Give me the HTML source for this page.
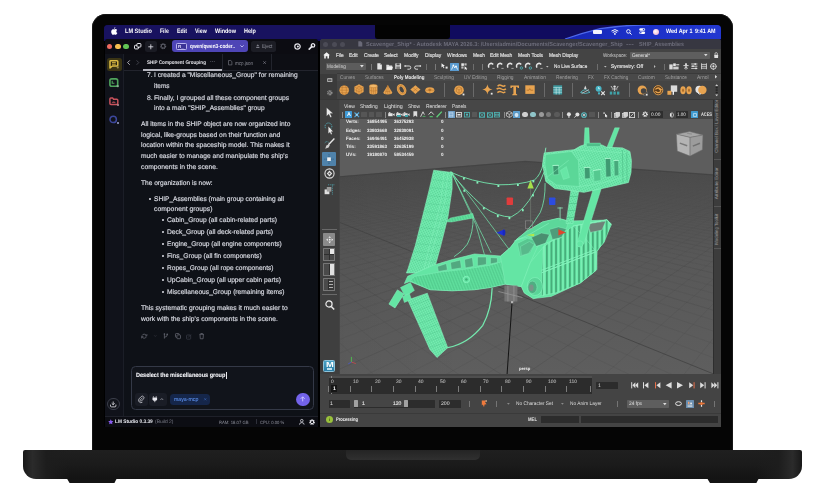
<!DOCTYPE html>
<html><head><meta charset="utf-8"><title>LM Studio + Maya</title>
<style>
*{box-sizing:border-box;margin:0;padding:0}
html,body{width:815px;height:493px;background:#fff;overflow:hidden}
body{font-family:"Liberation Sans",sans-serif;position:relative;text-rendering:geometricPrecision}
.a{position:absolute}
.t{position:absolute;white-space:nowrap;line-height:1;transform-origin:0 0}
svg{overflow:visible}
</style></head><body>
<div class="a" style="left:91.8px;top:13.9px;width:641.0px;height:440.0px;background:#050505;border-radius:14px 14px 0 0;box-shadow:inset 0 0 0 0.8px #1b1b1b;"></div>
<div class="a" style="left:66.0px;top:477.0px;width:51.5px;height:6.0px;background:#141414;clip-path:polygon(0 0,100% 0,94% 100%,7% 100%);"></div>
<div class="a" style="left:706.3px;top:477.0px;width:53.3px;height:6.0px;background:#141414;clip-path:polygon(0 0,100% 0,94% 100%,7% 100%);"></div>
<div class="a" style="left:23.0px;top:450.4px;width:779.0px;height:28.2px;background:linear-gradient(90deg,#181818 0,#2b2b2b 1.2%,#1d1d1d 3%,rgba(29,29,29,0) 6%,rgba(29,29,29,0) 94%,#1d1d1d 97%,#2b2b2b 98.8%,#181818 100%),linear-gradient(#1f1f1f,#1b1b1b 50%,#131313);border-radius:2px 2px 13px 13px;"></div>
<div class="a" style="left:345.5px;top:450.4px;width:134.0px;height:9.6px;background:linear-gradient(#242424,#303030);border-radius:0 0 5px 5px;"></div>
<div class="a" style="left:104px;top:25px;width:617px;height:401.5px;background:#000;border-radius:4px 4px 0 0;overflow:hidden">
<div class="a" style="left:-104px;top:-25px;width:815px;height:493px">
<div class="a" style="left:104.0px;top:25.0px;width:617.0px;height:16.0px;background:#100b5e;"></div>
<svg class="a" style="left:104.0px;top:25.0px;" width="617" height="16" viewBox="0 0 617 16"><defs><linearGradient id="wv" x1="0" y1="0" x2="1" y2="0"><stop offset="0" stop-color="#1626b4"/><stop offset="0.45" stop-color="#1b30c8"/><stop offset="1" stop-color="#2338d0"/></linearGradient></defs><path d="M461 14Q478 8 496 3.6Q520 0 545 0H617V14Z" fill="url(#wv)"/><path d="M461 14Q478 8 496 3.6Q520 0 545 -0.4" fill="none" stroke="#5c7cff" stroke-width="1.2" opacity="0.8"/><path d="M0 0H271V14H0Z" fill="#18125f"/></svg>
<div class="a" style="left:375.0px;top:25.0px;width:74.6px;height:13.5px;background:#030303;border-radius:0 0 3px 3px;"></div>
<svg class="a" style="left:111.0px;top:27.2px;" width="6.6" height="8" viewBox="0 0 6.6 8"><path d="M4.4 0.1Q4.4 1.5 3 2Q2.9 0.7 4.4 0.1Z M3.2 2.4Q4.2 1.8 5.2 2.2Q5.9 2.5 6.2 3Q5.2 3.6 5.3 4.7Q5.4 5.7 6.4 6.1Q5.9 7.4 5 7.8Q4.4 8 3.7 7.6Q3 7.4 2.4 7.7Q1.6 8 1 7.2Q0 5.9 0.2 4.2Q0.5 2.6 1.8 2.2Q2.5 2 3.2 2.4Z" fill="#fff"/></svg>
<span class="t" style="left:125.00px;top:27.64px;font-size:64px;color:#fff;transform:scale(0.0873,0.1);font-weight:bold;">LM Studio</span>
<span class="t" style="left:160.00px;top:27.64px;font-size:64px;color:#fff;transform:scale(0.0789,0.1);font-weight:bold;">File</span>
<span class="t" style="left:177.00px;top:27.64px;font-size:64px;color:#fff;transform:scale(0.0827,0.1);font-weight:bold;">Edit</span>
<span class="t" style="left:195.30px;top:27.64px;font-size:64px;color:#fff;transform:scale(0.0809,0.1);font-weight:bold;">View</span>
<span class="t" style="left:215.30px;top:27.64px;font-size:64px;color:#fff;transform:scale(0.0858,0.1);font-weight:bold;">Window</span>
<span class="t" style="left:244.00px;top:27.64px;font-size:64px;color:#fff;transform:scale(0.0851,0.1);font-weight:bold;">Help</span>
<div class="a" style="left:592.8px;top:30.1px;width:8.8px;height:3.8px;background:#f4f4ff;border-radius:1px;"></div>
<svg class="a" style="left:610.6px;top:28.6px;" width="7.8" height="6" viewBox="0 0 7.8 6"><path d="M0.5 2.1Q3.9 -0.9 7.3 2.1M1.7 3.5Q3.9 1.6 6.1 3.5" fill="none" stroke="#fff" stroke-width="1"/><circle cx="3.9" cy="4.9" r="0.9" fill="#fff"/></svg>
<svg class="a" style="left:625.8px;top:28.6px;" width="6" height="6" viewBox="0 0 6 6"><circle cx="2.4" cy="2.4" r="1.8" fill="none" stroke="#fff" stroke-width="0.9"/><path d="M3.8 3.8L5.6 5.6" stroke="#fff" stroke-width="1"/></svg>
<svg class="a" style="left:639.4px;top:28.4px;" width="6.4" height="6.4" viewBox="0 0 6.4 6.4"><rect x="0.3" y="0.3" width="5.8" height="2.5" rx="1.25" fill="#fff"/><rect x="0.3" y="3.5" width="5.8" height="2.5" rx="1.25" fill="#fff"/><circle cx="4.6" cy="1.55" r="0.8" fill="#2338d0"/><circle cx="1.8" cy="4.75" r="0.8" fill="#2338d0"/></svg>
<div class="a" style="left:652.6px;top:28.5px;width:6.0px;height:6.0px;background:radial-gradient(circle at 40% 40%,#fff,#f7c6dc 60%,#d8a0e8);border-radius:50%;"></div>
<span class="t" style="left:665.50px;top:27.74px;font-size:63px;color:#fff;transform:scale(0.0860,0.1);font-weight:bold;">Wed Apr 1</span>
<span class="t" style="left:695.00px;top:27.74px;font-size:63px;color:#fff;transform:scale(0.0861,0.1);font-weight:bold;">9:41 AM</span>
<div class="a" style="left:104.7px;top:38.7px;width:213.8px;height:388.0px;background:#0e1117;border-radius:3px 3px 0 0;"></div>
<div class="a" style="left:104.7px;top:38.7px;width:213.8px;height:15.0px;background:#0c0c12;border-radius:3px 3px 0 0;"></div>
<div class="a" style="left:104.7px;top:53.6px;width:18.5px;height:363.0px;background:#10121a;"></div>
<div class="a" style="left:123.2px;top:53.6px;width:0.6px;height:363.0px;background:#1b1e27;"></div>
<div class="a" style="left:123.8px;top:53.6px;width:194.7px;height:16.5px;background:#0d0e14;"></div>
<div class="a" style="left:123.8px;top:69.9px;width:194.7px;height:0.6px;background:#22242d;"></div>
<div class="a" style="left:106.8px;top:43.6px;width:5.6px;height:5.6px;background:#ee6a5f;border-radius:50%;"></div>
<div class="a" style="left:115.1px;top:43.6px;width:5.6px;height:5.6px;background:#f5bf4f;border-radius:50%;"></div>
<div class="a" style="left:123.1px;top:43.6px;width:5.6px;height:5.6px;background:#61c554;border-radius:50%;"></div>
<svg class="a" style="left:134.0px;top:43.2px;" width="7.5" height="6.5" viewBox="0 0 7.5 6.5"><rect x="0.5" y="2.3" width="4" height="3.6" rx="0.8" fill="none" stroke="#e8e8ee" stroke-width="1"/><rect x="2.9" y="0.5" width="4" height="3.6" rx="0.8" fill="#0c0c12" stroke="#e8e8ee" stroke-width="1"/></svg>
<div class="a" style="left:144.8px;top:41.0px;width:11.9px;height:10.8px;background:#1a1b23;border-radius:2.5px;"></div>
<svg class="a" style="left:147.9px;top:43.6px;" width="5.6" height="5.6" viewBox="0 0 5.6 5.6"><path d="M2.8 0.3V5.3M0.3 2.8H5.3" stroke="#d8d8e0" stroke-width="0.9" fill="none"/></svg>
<svg class="a" style="left:160.1px;top:43.2px;" width="6.4" height="6.4" viewBox="0 0 6.4 6.4"><circle cx="3.2" cy="3.2" r="2.3" fill="none" stroke="#5a5b66" stroke-width="1.5" stroke-dasharray="1.1 0.7"/><circle cx="3.2" cy="3.2" r="1.9" fill="none" stroke="#5a5b66" stroke-width="0.9"/></svg>
<div class="a" style="left:171.8px;top:40.4px;width:76.4px;height:12.0px;background:#4e45b6;border-radius:3px;"></div>
<div class="a" style="left:176.2px;top:43.3px;width:10.8px;height:6.3px;background:#3b3396;border-radius:1.3px;border:0.7px solid #b9b4ee;"></div>
<span class="t" style="left:177.60px;top:44.34px;font-size:44px;color:#e6e3ff;transform:scale(0.1000,0.1);font-weight:bold;">R_</span>
<span class="t" style="left:190.00px;top:43.14px;font-size:59px;color:#fff;transform:scale(0.0803,0.1);font-weight:bold;">qwen/qwen3-coder..</span>
<svg class="a" style="left:240.2px;top:45.2px;" width="4" height="2.6" viewBox="0 0 4 2.6"><path d="M0.4 0.4L2 2L3.6 0.4" stroke="#d9d6ff" stroke-width="0.8" fill="none"/></svg>
<div class="a" style="left:251.0px;top:40.7px;width:24.8px;height:11.0px;background:#1c1d25;border-radius:2.5px;"></div>
<svg class="a" style="left:255.6px;top:44.2px;" width="3.6" height="4.2" viewBox="0 0 3.6 4.2"><path d="M1.8 0.2L3.4 2.3H0.2Z M0.2 3.1H3.4V3.9H0.2Z" fill="#7c7d88"/></svg>
<span class="t" style="left:261.60px;top:43.34px;font-size:56px;color:#8d8e99;transform:scale(0.0835,0.1);">Eject</span>
<svg class="a" style="left:293.8px;top:42.9px;" width="7" height="7" viewBox="0 0 7 7"><circle cx="3.5" cy="3.5" r="2.7" fill="none" stroke="#e6e6ec" stroke-width="1.2"/><circle cx="3.9" cy="3.5" r="1" fill="#e6e6ec"/></svg>
<svg class="a" style="left:307.8px;top:42.8px;" width="7.4" height="7.4" viewBox="0 0 7.4 7.4"><path d="M1.2 6.2L4 3.4" stroke="#e6e6ec" stroke-width="1.7" stroke-linecap="round"/><circle cx="5" cy="2.4" r="1.7" fill="none" stroke="#e6e6ec" stroke-width="1.3"/></svg>
<div class="a" style="left:107.0px;top:57.6px;width:15.0px;height:13.4px;background:#3a3414;border-radius:2.5px;"></div>
<svg class="a" style="left:109.4px;top:60.0px;" width="9.6" height="9" viewBox="0 0 9.6 9"><path d="M1.6 0.8H8Q8.8 0.8 8.8 1.6V5.2Q8.8 6 8 6H3.4L1 8V1.6Q0.8 0.8 1.6 0.8Z" fill="#2a2510" stroke="#dcbc44" stroke-width="1.5" stroke-linejoin="round"/><path d="M3 2.6H6.8M3 4.2H6.8" stroke="#dcbc44" stroke-width="0.9"/><circle cx="8.8" cy="7.4" r="1.1" fill="#9a8a4a"/></svg>
<svg class="a" style="left:109.0px;top:78.4px;" width="9.8" height="9.6" viewBox="0 0 9.8 9.6"><rect x="0.9" y="0.9" width="7.8" height="7.4" rx="1.8" fill="none" stroke="#4fa45c" stroke-width="1.6"/><path d="M3.2 2.8V5.2H5.4" stroke="#4fa45c" stroke-width="1.1" fill="none"/><circle cx="8.8" cy="8.2" r="1.1" fill="#8ab092"/></svg>
<svg class="a" style="left:108.8px;top:97.0px;" width="10" height="9.4" viewBox="0 0 10 9.4"><path d="M0.9 2Q0.9 1 1.9 1H3.6L4.6 2.2H7.8Q8.8 2.2 8.8 3.2V6.6Q8.8 7.6 7.8 7.6H1.9Q0.9 7.6 0.9 6.6Z" fill="none" stroke="#c9525c" stroke-width="1.5"/><path d="M2.6 5.8Q4.6 3.2 6.8 5.8Z" fill="#c9525c"/><circle cx="9" cy="8" r="1.1" fill="#b08a90"/></svg>
<svg class="a" style="left:108.8px;top:115.0px;" width="10.6" height="10" viewBox="0 0 10.6 10"><circle cx="4.2" cy="4.4" r="3.2" fill="none" stroke="#3c479c" stroke-width="1.5"/><circle cx="9" cy="7.9" r="1" fill="#a0a6d0"/></svg>
<svg class="a" style="left:126.9px;top:59.8px;" width="3.4" height="5.2" viewBox="0 0 3.4 5.2"><path d="M2.8 0.4L0.6 2.6L2.8 4.8" stroke="#d0d0d8" stroke-width="0.8" fill="none"/></svg>
<svg class="a" style="left:136.2px;top:59.8px;" width="3.4" height="5.2" viewBox="0 0 3.4 5.2"><path d="M0.6 0.4L2.8 2.6L0.6 4.8" stroke="#4d4e59" stroke-width="0.8" fill="none"/></svg>
<span class="t" style="left:147.40px;top:59.54px;font-size:53px;color:#e4e4ea;transform:scale(0.0860,0.1);font-weight:bold;">SHIP Component Grouping</span>
<span class="t" style="left:210.20px;top:58.84px;font-size:50px;color:#6a6b76;transform:scale(0.1081,0.1);font-weight:bold;">···</span>
<div class="a" style="left:142.5px;top:69.4px;width:79.3px;height:1.2px;background:#b4b5be;"></div>
<div class="a" style="left:221.8px;top:53.6px;width:0.6px;height:16.3px;background:#22242d;"></div>
<div class="a" style="left:270.9px;top:53.6px;width:0.6px;height:16.3px;background:#22242d;"></div>
<svg class="a" style="left:227.6px;top:59.6px;" width="4.4" height="5.4" viewBox="0 0 4.4 5.4"><path d="M0.5 0.5H2.8L3.9 1.6V4.9H0.5Z" fill="none" stroke="#6f707b" stroke-width="0.7"/></svg>
<span class="t" style="left:234.60px;top:59.94px;font-size:54px;color:#8b8c97;transform:scale(0.0837,0.1);font-family:"Liberation Mono",monospace;">mcp.json</span>
<svg class="a" style="left:262.9px;top:60.8px;" width="3.2" height="3.2" viewBox="0 0 3.2 3.2"><path d="M0.3 0.3L2.9 2.9M2.9 0.3L0.3 2.9" stroke="#7a7b86" stroke-width="0.7"/></svg>
<span class="t" style="left:146.50px;top:71.34px;font-size:67.5px;color:#d9dbe3;transform:scale(0.1013,0.1);-webkit-text-stroke:1.6px #d9dbe3;">7.</span>
<span class="t" style="left:154.00px;top:71.34px;font-size:67.5px;color:#d9dbe3;transform:scale(0.0991,0.1);-webkit-text-stroke:1.6px #d9dbe3;">I created a "Miscellaneous_Group" for remaining</span>
<span class="t" style="left:154.00px;top:82.34px;font-size:67.5px;color:#d9dbe3;transform:scale(0.0967,0.1);-webkit-text-stroke:1.6px #d9dbe3;">items</span>
<span class="t" style="left:146.50px;top:94.34px;font-size:67.5px;color:#d9dbe3;transform:scale(0.1013,0.1);-webkit-text-stroke:1.6px #d9dbe3;">8.</span>
<span class="t" style="left:154.00px;top:94.34px;font-size:67.5px;color:#d9dbe3;transform:scale(0.0992,0.1);-webkit-text-stroke:1.6px #d9dbe3;">Finally, I grouped all these component groups</span>
<span class="t" style="left:154.00px;top:104.34px;font-size:67.5px;color:#d9dbe3;transform:scale(0.0980,0.1);-webkit-text-stroke:1.6px #d9dbe3;">into a main "SHIP_Assemblies" group</span>
<span class="t" style="left:141.00px;top:120.34px;font-size:67.5px;color:#d9dbe3;transform:scale(0.0986,0.1);-webkit-text-stroke:1.6px #d9dbe3;">All items in the SHIP object are now organized into</span>
<span class="t" style="left:141.00px;top:131.34px;font-size:67.5px;color:#d9dbe3;transform:scale(0.1001,0.1);-webkit-text-stroke:1.6px #d9dbe3;">logical, like-groups based on their function and</span>
<span class="t" style="left:141.00px;top:141.34px;font-size:67.5px;color:#d9dbe3;transform:scale(0.0994,0.1);-webkit-text-stroke:1.6px #d9dbe3;">location within the spaceship model. This makes it</span>
<span class="t" style="left:141.00px;top:152.34px;font-size:67.5px;color:#d9dbe3;transform:scale(0.0988,0.1);-webkit-text-stroke:1.6px #d9dbe3;">much easier to manage and manipulate the ship's</span>
<span class="t" style="left:141.00px;top:163.34px;font-size:67.5px;color:#d9dbe3;transform:scale(0.1001,0.1);-webkit-text-stroke:1.6px #d9dbe3;">components in the scene.</span>
<span class="t" style="left:141.00px;top:179.34px;font-size:67.5px;color:#d9dbe3;transform:scale(0.0977,0.1);-webkit-text-stroke:1.6px #d9dbe3;">The organization is now:</span>
<div class="a" style="left:149.1px;top:198.1px;width:1.8px;height:1.8px;background:#d9dbe3;border-radius:50%;"></div>
<span class="t" style="left:154.00px;top:195.34px;font-size:67.5px;color:#d9dbe3;transform:scale(0.0976,0.1);-webkit-text-stroke:1.6px #d9dbe3;">SHIP_Assemblies (main group containing all</span>
<span class="t" style="left:154.00px;top:205.34px;font-size:67.5px;color:#d9dbe3;transform:scale(0.1006,0.1);-webkit-text-stroke:1.6px #d9dbe3;">component groups)</span>
<div class="a" style="left:162.1px;top:219.0px;width:1.8px;height:1.8px;background:#d9dbe3;border-radius:50%;"></div>
<span class="t" style="left:167.40px;top:216.34px;font-size:67.5px;color:#d9dbe3;transform:scale(0.0990,0.1);-webkit-text-stroke:1.6px #d9dbe3;">Cabin_Group (all cabin-related parts)</span>
<div class="a" style="left:162.1px;top:231.0px;width:1.8px;height:1.8px;background:#d9dbe3;border-radius:50%;"></div>
<span class="t" style="left:167.40px;top:228.34px;font-size:67.5px;color:#d9dbe3;transform:scale(0.0992,0.1);-webkit-text-stroke:1.6px #d9dbe3;">Deck_Group (all deck-related parts)</span>
<div class="a" style="left:162.1px;top:243.1px;width:1.8px;height:1.8px;background:#d9dbe3;border-radius:50%;"></div>
<span class="t" style="left:167.40px;top:240.34px;font-size:67.5px;color:#d9dbe3;transform:scale(0.0977,0.1);-webkit-text-stroke:1.6px #d9dbe3;">Engine_Group (all engine components)</span>
<div class="a" style="left:162.1px;top:255.2px;width:1.8px;height:1.8px;background:#d9dbe3;border-radius:50%;"></div>
<span class="t" style="left:167.40px;top:252.34px;font-size:67.5px;color:#d9dbe3;transform:scale(0.0985,0.1);-webkit-text-stroke:1.6px #d9dbe3;">Fins_Group (all fin components)</span>
<div class="a" style="left:162.1px;top:267.2px;width:1.8px;height:1.8px;background:#d9dbe3;border-radius:50%;"></div>
<span class="t" style="left:167.40px;top:264.34px;font-size:67.5px;color:#d9dbe3;transform:scale(0.0976,0.1);-webkit-text-stroke:1.6px #d9dbe3;">Ropes_Group (all rope components)</span>
<div class="a" style="left:162.1px;top:279.2px;width:1.8px;height:1.8px;background:#d9dbe3;border-radius:50%;"></div>
<span class="t" style="left:167.40px;top:276.34px;font-size:67.5px;color:#d9dbe3;transform:scale(0.0983,0.1);-webkit-text-stroke:1.6px #d9dbe3;">UpCabin_Group (all upper cabin parts)</span>
<div class="a" style="left:162.1px;top:291.3px;width:1.8px;height:1.8px;background:#d9dbe3;border-radius:50%;"></div>
<span class="t" style="left:167.40px;top:288.34px;font-size:67.5px;color:#d9dbe3;transform:scale(0.0985,0.1);-webkit-text-stroke:1.6px #d9dbe3;">Miscellaneous_Group (remaining items)</span>
<span class="t" style="left:141.00px;top:304.34px;font-size:67.5px;color:#d9dbe3;transform:scale(0.0992,0.1);-webkit-text-stroke:1.6px #d9dbe3;">This systematic grouping makes it much easier to</span>
<span class="t" style="left:141.00px;top:315.34px;font-size:67.5px;color:#d9dbe3;transform:scale(0.0999,0.1);-webkit-text-stroke:1.6px #d9dbe3;">work with the ship's components in the scene.</span>
<svg class="a" style="left:140.6px;top:333.3px;" width="6.4" height="6.4" viewBox="0 0 6.4 6.4"><path d="M1 2.6A2.4 2.4 0 0 1 5.4 2.6M5.4 3.8A2.4 2.4 0 0 1 1 3.8" fill="none" stroke="#62646f" stroke-width="0.8"/><path d="M5.9 1V2.9H4M0.5 5.4V3.5H2.4" fill="none" stroke="#62646f" stroke-width="0.7"/></svg>
<svg class="a" style="left:154.0px;top:335.4px;" width="2.6" height="2" viewBox="0 0 2.6 2"><path d="M0.2 0.3L1.3 1.5L2.4 0.3" stroke="#3a3c47" stroke-width="0.6" fill="none"/></svg>
<svg class="a" style="left:163.4px;top:333.4px;" width="5.6" height="6.2" viewBox="0 0 5.6 6.2"><path d="M1.4 0.8V5.6M1.4 4.2Q4.2 4.2 4.2 1.8" fill="none" stroke="#62646f" stroke-width="0.8"/><circle cx="1.4" cy="1" r="0.8" fill="#62646f"/><circle cx="4.2" cy="1.4" r="0.8" fill="#62646f"/></svg>
<svg class="a" style="left:175.4px;top:333.4px;" width="6" height="6.2" viewBox="0 0 6 6.2"><rect x="0.5" y="0.5" width="3.6" height="3.8" rx="0.7" fill="none" stroke="#62646f" stroke-width="0.8"/><rect x="1.9" y="1.9" width="3.6" height="3.8" rx="0.7" fill="#0e1117" stroke="#62646f" stroke-width="0.8"/></svg>
<svg class="a" style="left:186.3px;top:333.5px;" width="5.6" height="5.8" viewBox="0 0 5.6 5.8"><rect x="0.5" y="1" width="4.2" height="4.2" rx="0.7" fill="none" stroke="#3a3c47" stroke-width="0.7"/><path d="M2 3.6L5 0.6" stroke="#3a3c47" stroke-width="0.7"/></svg>
<svg class="a" style="left:198.6px;top:333.3px;" width="5.4" height="6.4" viewBox="0 0 5.4 6.4"><path d="M0.4 1.4H5M1.8 1.2V0.5H3.6V1.2M1 1.6L1.3 5.8H4.1L4.4 1.6" fill="none" stroke="#62646f" stroke-width="0.8"/></svg>
<div class="a" style="left:130.5px;top:365.6px;width:183.5px;height:44.3px;background:#11141b;border-radius:4.5px;border:0.9px solid #343947;"></div>
<span class="t" style="left:135.90px;top:371.74px;font-size:63px;color:#f4f5f9;transform:scale(0.0877,0.1);font-weight:bold;-webkit-text-stroke:0.8px #f4f5f9;">Deselect the miscellaneous group</span>
<div class="a" style="left:225.9px;top:372.2px;width:0.6px;height:6.8px;background:#e8e8ee;"></div>
<div class="a" style="left:134.5px;top:393.0px;width:13.5px;height:12.6px;background:#1a1d26;border-radius:3px;"></div>
<svg class="a" style="left:138.0px;top:395.8px;" width="6.6" height="7" viewBox="0 0 6.6 7"><path d="M4.9 2L2.6 4.3A0.8 0.8 0 0 0 3.8 5.4L5.8 3.3A1.6 1.6 0 0 0 3.5 1L1.3 3.3A2.4 2.4 0 0 0 4.7 6.6" fill="none" stroke="#c9cad2" stroke-width="0.8" transform="translate(-0.3,-0.4)"/></svg>
<div class="a" style="left:149.4px;top:393.0px;width:17.6px;height:12.6px;background:#1a1d26;border-radius:3px;"></div>
<svg class="a" style="left:152.4px;top:396.2px;" width="6" height="6.4" viewBox="0 0 6 6.4"><path d="M1.4 0.3V1.5M4.2 0.3V1.5" stroke="#e6e6ec" stroke-width="0.8"/><path d="M0.5 1.5H5.1V3.2Q5.1 5 2.8 5Q0.5 5 0.5 3.2Z" fill="#e6e6ec"/><path d="M2.8 5V6.2" stroke="#e6e6ec" stroke-width="0.8"/></svg>
<svg class="a" style="left:160.4px;top:398.4px;" width="3.6" height="2.4" viewBox="0 0 3.6 2.4"><path d="M0.4 2L1.8 0.5L3.2 2" stroke="#a9aab4" stroke-width="0.7" fill="none"/></svg>
<div class="a" style="left:169.6px;top:393.7px;width:40.4px;height:11.6px;background:#15264a;border-radius:3.5px;"></div>
<span class="t" style="left:174.20px;top:396.34px;font-size:56px;color:#5585dc;transform:scale(0.0930,0.1);-webkit-text-stroke:1.4px #5585dc;">maya-mcp</span>
<svg class="a" style="left:203.5px;top:398.2px;" width="2.6" height="2.6" viewBox="0 0 2.6 2.6"><path d="M0.3 0.3L2.3 2.3M2.3 0.3L0.3 2.3" stroke="#3d67b5" stroke-width="0.6"/></svg>
<div class="a" style="left:296.3px;top:392.6px;width:13.4px;height:13.4px;background:#7363ea;border-radius:50%;"></div>
<svg class="a" style="left:300.3px;top:396.4px;" width="5.4" height="5.8" viewBox="0 0 5.4 5.8"><path d="M2.7 5.4V0.9M0.7 2.8L2.7 0.8L4.7 2.8" stroke="#cfc8ff" stroke-width="0.9" fill="none"/></svg>
<div class="a" style="left:107.1px;top:397.6px;width:12.8px;height:12.8px;background:#12141b;border-radius:50%;border:0.8px solid #3a3d49;"></div>
<svg class="a" style="left:110.3px;top:400.6px;" width="6.4" height="6.6" viewBox="0 0 6.4 6.6"><path d="M3.2 0.5V3.6M1.7 2.3L3.2 3.8L4.7 2.3" stroke="#e6e6ec" stroke-width="0.8" fill="none"/><path d="M0.5 3.6V5Q0.5 5.9 1.4 5.9H5Q5.9 5.9 5.9 5V3.6" stroke="#e6e6ec" stroke-width="0.8" fill="none"/></svg>
<div class="a" style="left:104.7px;top:416.2px;width:213.8px;height:10.5px;background:#0c0d13;"></div>
<div class="a" style="left:104.7px;top:416.0px;width:213.8px;height:0.6px;background:#1e2029;"></div>
<svg class="a" style="left:107.8px;top:418.6px;" width="5.6" height="5.6" viewBox="0 0 5.6 5.6"><path d="M2.8 0.2L3.6 1.9L5.4 2.1L4.1 3.4L4.4 5.3L2.8 4.4L1.2 5.3L1.5 3.4L0.2 2.1L2 1.9Z" fill="#8a5cf0"/></svg>
<span class="t" style="left:115.40px;top:418.64px;font-size:52px;color:#eceef4;transform:scale(0.0921,0.1);font-weight:bold;">LM Studio 0.3.39</span>
<span class="t" style="left:155.00px;top:418.84px;font-size:50px;color:#7b7d89;transform:scale(0.0988,0.1);">(Build 2)</span>
<span class="t" style="left:218.80px;top:419.54px;font-size:46px;color:#8e909b;transform:scale(0.0917,0.1);font-family:"Liberation Mono",monospace;">RAM: 18.07 GB</span>
<div class="a" style="left:255.8px;top:418.8px;width:0.5px;height:5.6px;background:#2e303a;"></div>
<span class="t" style="left:260.00px;top:419.54px;font-size:46px;color:#8e909b;transform:scale(0.0909,0.1);font-family:"Liberation Mono",monospace;">CPU: 0.00 %</span>
<svg class="a" style="left:298.8px;top:418.6px;" width="5.6" height="6" viewBox="0 0 5.6 6"><circle cx="2.8" cy="1.7" r="1.3" fill="none" stroke="#d6d7df" stroke-width="0.8"/><path d="M0.5 5.6Q0.5 3.6 2.8 3.6Q5.1 3.6 5.1 5.6" fill="none" stroke="#d6d7df" stroke-width="0.8"/></svg>
<svg class="a" style="left:309.4px;top:418.5px;" width="6.2" height="6.2" viewBox="0 0 6.2 6.2"><circle cx="3.1" cy="3.1" r="2" fill="none" stroke="#e6e6ec" stroke-width="1.6" stroke-dasharray="1 0.58"/><circle cx="3.1" cy="3.1" r="1.6" fill="none" stroke="#e6e6ec" stroke-width="1"/></svg>
<div class="a" style="left:320.2px;top:38.7px;width:401.0px;height:387.7px;background:#444444;border-radius:3px 3px 0 3px;"></div>
<div class="a" style="left:320.2px;top:38.7px;width:401.0px;height:10.8px;background:#373741;border-radius:3px 3px 0 0;"></div>
<div class="a" style="left:323.1px;top:41.5px;width:5.4px;height:5.4px;background:#4b4b56;border-radius:50%;"></div>
<div class="a" style="left:331.5px;top:41.5px;width:5.4px;height:5.4px;background:#4b4b56;border-radius:50%;"></div>
<div class="a" style="left:339.8px;top:41.5px;width:5.4px;height:5.4px;background:#4b4b56;border-radius:50%;"></div>
<svg class="a" style="left:358.3px;top:41.2px;" width="4.6" height="5.8" viewBox="0 0 4.6 5.8"><path d="M0.3 0.3H2.9L4.3 1.7V5.5H0.3Z" fill="#6a6a78"/></svg>
<span class="t" style="left:365.70px;top:41.14px;font-size:59px;color:#6c6c7a;transform:scale(0.0947,0.1);font-weight:bold;">Scavenger_Ship* - Autodesk MAYA 2026.3: /Users/admin/Documents/Scavenger/Scavenger_Ship</span>
<span class="t" style="left:626.20px;top:41.14px;font-size:59px;color:#6c6c7a;transform:scale(0.1323,0.1);font-weight:bold;">---</span>
<span class="t" style="left:639.00px;top:41.14px;font-size:59px;color:#6c6c7a;transform:scale(0.0903,0.1);font-weight:bold;">SHIP_Assemblies</span>
<svg class="a" style="left:323.2px;top:51.8px;" width="7.2" height="6.8" viewBox="0 0 7.2 6.8"><path d="M3.6 0.3L7 3.3H6V6.5H4.4V4.3H2.8V6.5H1.2V3.3H0.2Z" fill="#f0f0f0"/></svg>
<span class="t" style="left:335.70px;top:52.34px;font-size:56px;color:#e6e6e6;transform:scale(0.0842,0.1);-webkit-text-stroke:1.4px #e6e6e6;">File</span>
<span class="t" style="left:349.00px;top:52.34px;font-size:56px;color:#e6e6e6;transform:scale(0.0881,0.1);-webkit-text-stroke:1.4px #e6e6e6;">Edit</span>
<span class="t" style="left:364.00px;top:52.34px;font-size:56px;color:#e6e6e6;transform:scale(0.0880,0.1);-webkit-text-stroke:1.4px #e6e6e6;">Create</span>
<span class="t" style="left:384.30px;top:52.34px;font-size:56px;color:#e6e6e6;transform:scale(0.0880,0.1);-webkit-text-stroke:1.4px #e6e6e6;">Select</span>
<span class="t" style="left:404.00px;top:52.34px;font-size:56px;color:#e6e6e6;transform:scale(0.0885,0.1);-webkit-text-stroke:1.4px #e6e6e6;">Modify</span>
<span class="t" style="left:424.70px;top:52.34px;font-size:56px;color:#e6e6e6;transform:scale(0.0888,0.1);-webkit-text-stroke:1.4px #e6e6e6;">Display</span>
<span class="t" style="left:446.80px;top:52.34px;font-size:56px;color:#e6e6e6;transform:scale(0.0876,0.1);-webkit-text-stroke:1.4px #e6e6e6;">Windows</span>
<span class="t" style="left:473.00px;top:52.34px;font-size:56px;color:#e6e6e6;transform:scale(0.0876,0.1);-webkit-text-stroke:1.4px #e6e6e6;">Mesh</span>
<span class="t" style="left:490.00px;top:52.34px;font-size:56px;color:#e6e6e6;transform:scale(0.0896,0.1);-webkit-text-stroke:1.4px #e6e6e6;">Edit Mesh</span>
<span class="t" style="left:518.00px;top:52.34px;font-size:56px;color:#e6e6e6;transform:scale(0.0886,0.1);-webkit-text-stroke:1.4px #e6e6e6;">Mesh Tools</span>
<span class="t" style="left:549.00px;top:52.34px;font-size:56px;color:#e6e6e6;transform:scale(0.0872,0.1);-webkit-text-stroke:1.4px #e6e6e6;">Mesh Display</span>
<span class="t" style="left:602.70px;top:52.44px;font-size:54px;color:#d0d0d0;transform:scale(0.0848,0.1);">Workspace:</span>
<div class="a" style="left:630.0px;top:51.8px;width:80.0px;height:6.8px;background:#5e5e5e;border-radius:0.8px;"></div>
<span class="t" style="left:631.50px;top:52.54px;font-size:53px;color:#e8e8e8;transform:scale(0.0860,0.1);">General*</span>
<svg class="a" style="left:704.4px;top:54.0px;" width="3.6" height="2.4" viewBox="0 0 3.6 2.4"><path d="M0 0H3.6L1.8 2.2Z" fill="#d8d8d8"/></svg>
<svg class="a" style="left:714.4px;top:51.6px;" width="4.4" height="6.2" viewBox="0 0 4.4 6.2"><path d="M1 2.8V1.8A1.2 1.2 0 0 1 3.4 1.8V2.8" fill="none" stroke="#d8d8d8" stroke-width="0.8"/><rect x="0.3" y="2.7" width="3.8" height="3.2" rx="0.5" fill="#e0e0e0"/></svg>
<div class="a" style="left:325.7px;top:63.0px;width:40.0px;height:7.3px;background:#5c5c5c;border-radius:0.8px;"></div>
<span class="t" style="left:327.20px;top:63.54px;font-size:53px;color:#d8d8d8;transform:scale(0.0874,0.1);">Modeling</span>
<svg class="a" style="left:359.6px;top:65.4px;" width="3.8" height="2.6" viewBox="0 0 3.8 2.6"><path d="M0 0H3.8L1.9 2.4Z" fill="#e0e0e0"/></svg>
<div class="a" style="left:370.6px;top:63.7px;width:0.8px;height:6.0px;background:#7a7a7a;"></div>
<svg class="a" style="left:377.4px;top:63.2px;" width="5.2" height="6.8" viewBox="0 0 5.2 6.8"><path d="M0.3 0.3H3.2L4.9 2V6.5H0.3Z" fill="#e4e4e4"/><path d="M3.2 0.3V2H4.9" fill="#9a9a9a"/></svg>
<svg class="a" style="left:385.8px;top:63.6px;" width="7.2" height="6.2" viewBox="0 0 7.2 6.2"><path d="M0.3 0.8H2.6L3.3 1.6H6.2V5.8H0.3Z" fill="#d8d8d8"/><path d="M1.5 2.8H7L6 5.8H0.4Z" fill="#f4f4f4"/></svg>
<svg class="a" style="left:395.3px;top:63.4px;" width="6.4" height="6.4" viewBox="0 0 6.4 6.4"><rect x="0.3" y="0.3" width="5.8" height="5.8" rx="0.6" fill="#e0e0e0"/><rect x="1.5" y="0.3" width="3.2" height="2" fill="#555"/><rect x="1.3" y="3.4" width="3.6" height="2.7" fill="#777"/></svg>
<svg class="a" style="left:404.4px;top:64.6px;" width="7.4" height="4.6" viewBox="0 0 7.4 4.6"><path d="M0.5 1H5.2A1.6 1.6 0 0 1 5.2 4.2H3.4" fill="none" stroke="#e8e8e8" stroke-width="0.9"/><path d="M1.6 0L0 1L1.6 2Z" fill="#e8e8e8"/></svg>
<svg class="a" style="left:413.6px;top:64.6px;" width="7.4" height="4.6" viewBox="0 0 7.4 4.6"><path d="M6.9 1H2.2A1.6 1.6 0 0 0 2.2 4.2H4" fill="none" stroke="#e8e8e8" stroke-width="0.9"/><path d="M5.8 0L7.4 1L5.8 2Z" fill="#e8e8e8"/></svg>
<div class="a" style="left:426.4px;top:63.7px;width:0.8px;height:6.0px;background:#6e6e6e;"></div>
<div class="a" style="left:435.3px;top:63.7px;width:0.8px;height:6.0px;background:#7a7a7a;"></div>
<svg class="a" style="left:441.0px;top:63.3px;" width="7" height="7" viewBox="0 0 7 7"><path d="M0.5 0.3L0.5 4.4L1.7 3.4L2.6 5.3L3.4 4.9L2.5 3.1H4Z" fill="#f0f0f0"/><rect x="4.6" y="3.6" width="2" height="2" fill="#e8e8e8"/></svg>
<div class="a" style="left:450.0px;top:62.7px;width:9.2px;height:8.2px;background:#5a9bd0;border-radius:0.6px;"></div>
<svg class="a" style="left:451.0px;top:63.5px;" width="7.2" height="6.6" viewBox="0 0 7.2 6.6"><path d="M0.6 5.6L2.4 1.2L3.8 4L5 2L6.6 5.6" fill="none" stroke="#fff" stroke-width="0.8"/><circle cx="2.4" cy="1.4" r="0.8" fill="#fff"/><circle cx="5" cy="2.2" r="0.8" fill="#fff"/></svg>
<svg class="a" style="left:461.0px;top:63.3px;" width="7" height="7" viewBox="0 0 7 7"><rect x="0.3" y="0.3" width="2.6" height="2.6" fill="#e8e8e8"/><rect x="3.4" y="0.3" width="2.2" height="2.2" fill="#bdbdbd"/><rect x="0.3" y="3.4" width="2.2" height="2.2" fill="#bdbdbd"/><path d="M3.6 3.2V6.8L4.6 6L5.3 7L5.9 6.6L5.2 5.6H6.4Z" fill="#f4f4f4"/></svg>
<div class="a" style="left:472.9px;top:63.7px;width:0.8px;height:6.0px;background:#6e6e6e;"></div>
<div class="a" style="left:482.4px;top:63.7px;width:0.8px;height:6.0px;background:#7a7a7a;"></div>
<svg class="a" style="left:487.9px;top:63.3px;" width="6.8" height="6.8" viewBox="0 0 6.8 6.8"><path d="M1.2 4.9A2.3 2.3 0 1 1 4.9 1.3" fill="none" stroke="#e4e4e4" stroke-width="1.5" transform="rotate(8 3.4 3.4)"/><path d="M4.4 5.4H6.6" stroke="#d0d0d0" stroke-width="0.7"/></svg>
<svg class="a" style="left:497.1px;top:63.3px;" width="6.8" height="6.8" viewBox="0 0 6.8 6.8"><path d="M1.2 4.9A2.3 2.3 0 1 1 4.9 1.3" fill="none" stroke="#e4e4e4" stroke-width="1.5" transform="rotate(8 3.4 3.4)"/><path d="M4.4 5.4H6.6" stroke="#d0d0d0" stroke-width="0.7"/></svg>
<svg class="a" style="left:506.6px;top:63.3px;" width="6.8" height="6.8" viewBox="0 0 6.8 6.8"><path d="M1.2 4.9A2.3 2.3 0 1 1 4.9 1.3" fill="none" stroke="#e4e4e4" stroke-width="1.5" transform="rotate(8 3.4 3.4)"/><path d="M4.4 5.4H6.6" stroke="#d0d0d0" stroke-width="0.7"/></svg>
<svg class="a" style="left:515.6px;top:63.3px;" width="6.8" height="6.8" viewBox="0 0 6.8 6.8"><path d="M1.2 4.9A2.3 2.3 0 1 1 4.9 1.3" fill="none" stroke="#e4e4e4" stroke-width="1.5" transform="rotate(8 3.4 3.4)"/><circle cx="5.4" cy="5" r="1.2" fill="none" stroke="#4fc3c8" stroke-width="0.7"/></svg>
<svg class="a" style="left:525.3px;top:63.3px;" width="6.8" height="6.8" viewBox="0 0 6.8 6.8"><path d="M1.2 4.9A2.3 2.3 0 1 1 4.9 1.3" fill="none" stroke="#e4e4e4" stroke-width="1.5" transform="rotate(8 3.4 3.4)"/><circle cx="5.4" cy="5" r="1.2" fill="none" stroke="#4fc3c8" stroke-width="0.7"/></svg>
<svg class="a" style="left:535.6px;top:63.3px;" width="6.8" height="6.8" viewBox="0 0 6.8 6.8"><path d="M1.2 4.9A2.3 2.3 0 1 1 4.9 1.3" fill="none" stroke="#e4e4e4" stroke-width="1.5" transform="rotate(8 3.4 3.4)"/><path d="M4.4 5.4H6.6" stroke="#d0d0d0" stroke-width="0.7"/></svg>
<svg class="a" style="left:545.6px;top:66.0px;" width="2.6" height="1.8" viewBox="0 0 2.6 1.8"><path d="M0 0H2.6L1.3 1.6Z" fill="#bdbdbd"/></svg>
<span class="t" style="left:553.70px;top:63.54px;font-size:53px;color:#ececec;transform:scale(0.0883,0.1);-webkit-text-stroke:1.2px #ececec;">No Live Surface</span>
<div class="a" style="left:596.9px;top:63.7px;width:0.8px;height:6.0px;background:#6e6e6e;"></div>
<svg class="a" style="left:604.4px;top:66.0px;" width="2.6" height="1.8" viewBox="0 0 2.6 1.8"><path d="M0 0H2.6L1.3 1.6Z" fill="#bdbdbd"/></svg>
<span class="t" style="left:611.30px;top:63.54px;font-size:53px;color:#ececec;transform:scale(0.0954,0.1);-webkit-text-stroke:1.2px #ececec;">Symmetry: Off</span>
<svg class="a" style="left:654.2px;top:65.2px;" width="1.8" height="3" viewBox="0 0 1.8 3"><path d="M0 0L1.6 1.5L0 3Z" fill="#bdbdbd"/></svg>
<div class="a" style="left:663.9px;top:63.7px;width:0.8px;height:6.0px;background:#6e6e6e;"></div>
<svg class="a" style="left:669.0px;top:63.2px;" width="11" height="7" viewBox="0 0 11 7"><rect x="0.3" y="1.4" width="3.4" height="5" fill="#dcdcdc"/><rect x="4.2" y="0.4" width="2.6" height="2.6" fill="#e8e8e8"/><rect x="4.2" y="3.6" width="5.4" height="2.8" fill="#cfcfcf"/><rect x="7.2" y="1" width="3" height="1.4" fill="#bdbdbd"/></svg>
<svg class="a" style="left:683.2px;top:63.2px;" width="6" height="7" viewBox="0 0 6 7"><path d="M3 0.3V6.6M0.4 2.6H5.6M1.4 5.6L3 3.6L4.6 5.6" stroke="#e0e0e0" stroke-width="0.9" fill="none"/><circle cx="3" cy="1.2" r="0.9" fill="#e0e0e0"/></svg>
<svg class="a" style="left:691.4px;top:63.4px;" width="6.6" height="6.6" viewBox="0 0 6.6 6.6"><path d="M0.2 1H6.4M0.2 3.2H6.4M0.2 5.4H6.4" stroke="#dcdcdc" stroke-width="0.9"/><rect x="3.6" y="0.3" width="1.2" height="1.6" fill="#f4f4f4"/><rect x="1.4" y="2.4" width="1.2" height="1.6" fill="#f4f4f4"/><rect x="4.4" y="4.6" width="1.2" height="1.6" fill="#f4f4f4"/></svg>
<svg class="a" style="left:700.6px;top:63.4px;" width="6" height="6.6" viewBox="0 0 6 6.6"><path d="M0.5 0.3V6.3M5.5 0.3V6.3M0.5 1.4H5.5M0.5 3.3H5.5M0.5 5.2H5.5" stroke="#dcdcdc" stroke-width="0.8"/></svg>
<svg class="a" style="left:709.6px;top:63.2px;" width="6.8" height="6.8" viewBox="0 0 6.8 6.8"><circle cx="3.4" cy="3.4" r="2.8" fill="none" stroke="#e0e0e0" stroke-width="0.9"/><circle cx="3.4" cy="3.4" r="1.1" fill="#e0e0e0"/><path d="M3.4 0V1.4M3.4 5.4V6.8M0 3.4H1.4M5.4 3.4H6.8" stroke="#e0e0e0" stroke-width="0.8"/></svg>
<div class="a" style="left:319.8px;top:73.6px;width:401.4px;height:7.8px;background:#494949;"></div>
<div class="a" style="left:337.0px;top:73.4px;width:384.2px;height:0.6px;background:#3a3a3a;"></div>
<span class="t" style="left:340.00px;top:74.44px;font-size:54px;color:#a2a2a2;transform:scale(0.0877,0.1);">Curves</span>
<span class="t" style="left:365.00px;top:74.44px;font-size:54px;color:#a2a2a2;transform:scale(0.0868,0.1);">Surfaces</span>
<span class="t" style="left:393.50px;top:74.44px;font-size:54px;color:#f0f0f0;transform:scale(0.0833,0.1);font-weight:bold;">Poly Modeling</span>
<span class="t" style="left:434.00px;top:74.44px;font-size:54px;color:#a2a2a2;transform:scale(0.0900,0.1);">Sculpting</span>
<span class="t" style="left:464.00px;top:74.44px;font-size:54px;color:#a2a2a2;transform:scale(0.0901,0.1);">UV Editing</span>
<span class="t" style="left:496.70px;top:74.44px;font-size:54px;color:#a2a2a2;transform:scale(0.0906,0.1);">Rigging</span>
<span class="t" style="left:523.70px;top:74.44px;font-size:54px;color:#a2a2a2;transform:scale(0.0920,0.1);">Animation</span>
<span class="t" style="left:556.30px;top:74.44px;font-size:54px;color:#a2a2a2;transform:scale(0.0883,0.1);">Rendering</span>
<span class="t" style="left:587.70px;top:74.44px;font-size:54px;color:#a2a2a2;transform:scale(0.0841,0.1);">FX</span>
<span class="t" style="left:603.50px;top:74.44px;font-size:54px;color:#a2a2a2;transform:scale(0.0858,0.1);">FX Caching</span>
<span class="t" style="left:638.00px;top:74.44px;font-size:54px;color:#a2a2a2;transform:scale(0.0898,0.1);">Custom</span>
<span class="t" style="left:665.00px;top:74.44px;font-size:54px;color:#a2a2a2;transform:scale(0.0854,0.1);">Substance</span>
<span class="t" style="left:697.00px;top:74.44px;font-size:54px;color:#a2a2a2;transform:scale(0.0912,0.1);">Arnol</span>
<svg class="a" style="left:714.6px;top:75.4px;" width="2.4" height="3.6" viewBox="0 0 2.4 3.6"><path d="M0 0L2.2 1.8L0 3.6Z" fill="#d8d8d8"/></svg>
<div class="a" style="left:319.8px;top:81.4px;width:401.4px;height:17.6px;background:#444;"></div>
<div class="a" style="left:319.8px;top:73.6px;width:17.6px;height:25.4px;background:#3b3b3b;"></div>
<svg class="a" style="left:327.2px;top:77.6px;" width="5.6" height="4.2" viewBox="0 0 5.6 4.2"><rect x="0.3" y="0.3" width="5" height="3.6" fill="#cfcfcf"/><rect x="1" y="1.2" width="3.6" height="2" fill="#555"/></svg>
<svg class="a" style="left:327.2px;top:90.0px;" width="5.6" height="5.6" viewBox="0 0 5.6 5.6"><circle cx="2.8" cy="2.8" r="2" fill="none" stroke="#9a9a9a" stroke-width="1.4" stroke-dasharray="0.9 0.6"/><circle cx="2.8" cy="2.8" r="1.1" fill="none" stroke="#9a9a9a" stroke-width="0.7"/></svg>
<svg class="a" style="left:338.8px;top:84.5px;" width="10.4" height="10.4" viewBox="0 0 10.4 10.4"><circle cx="5.2" cy="5.2" r="4.8" fill="#e7a350"/><ellipse cx="5.2" cy="5.2" rx="2.2" ry="4.8" fill="none" stroke="#b0702a" stroke-width="0.5"/><path d="M0.4 5.2H10M1.2 2.6H9.2M1.2 7.8H9.2" stroke="#b0702a" stroke-width="0.5"/></svg>
<svg class="a" style="left:353.5px;top:84.3px;" width="10" height="10.8" viewBox="0 0 10 10.8"><path d="M5 0.3L9.6 2.8V8L5 10.5L0.4 8V2.8Z" fill="#e7a350"/><path d="M0.4 2.8L5 5.3L9.6 2.8M5 5.3V10.5M2.7 1.5L7.3 4M7.3 1.5L2.7 4M0.4 5.4L5 7.9L9.6 5.4M2.7 4V9.2M7.3 4V9.2" stroke="#b0702a" stroke-width="0.45" fill="none"/></svg>
<svg class="a" style="left:368.6px;top:84.3px;" width="8.8" height="10.8" viewBox="0 0 8.8 10.8"><path d="M0.4 2V8.8A4 1.7 0 0 0 8.4 8.8V2Z" fill="#e7a350"/><ellipse cx="4.4" cy="2" rx="4" ry="1.7" fill="#f2b868" stroke="#b0702a" stroke-width="0.4"/><path d="M2.4 3.5V10.2M4.4 3.7V10.5M6.4 3.5V10.2M0.4 5.4A4 1.7 0 0 0 8.4 5.4" stroke="#b0702a" stroke-width="0.45" fill="none"/></svg>
<svg class="a" style="left:382.9px;top:85.1px;" width="9.6" height="10" viewBox="0 0 9.6 10"><path d="M4.8 0.3L9.3 7.6A4.5 1.9 0 0 1 0.3 7.6Z" fill="#e7a350"/><path d="M4.8 0.3V9.5M4.8 0.3L2.4 9M4.8 0.3L7.2 9M1.6 5.4A3.2 1.2 0 0 0 8 5.4" stroke="#b0702a" stroke-width="0.45" fill="none"/></svg>
<svg class="a" style="left:396.9px;top:84.1px;" width="9.2" height="11.2" viewBox="0 0 9.2 11.2"><ellipse cx="4.6" cy="5.6" rx="3.1" ry="4.6" fill="none" stroke="#e7a350" stroke-width="2.6" transform="rotate(-28 4.6 5.6)"/><ellipse cx="4.6" cy="5.6" rx="3.1" ry="4.6" fill="none" stroke="#b0702a" stroke-width="0.4" transform="rotate(-28 4.6 5.6)"/></svg>
<svg class="a" style="left:410.3px;top:85.1px;" width="10.8" height="9.2" viewBox="0 0 10.8 9.2"><path d="M5.4 0.3L10.5 4.6L5.4 8.9L0.3 4.6Z" fill="#e7a350"/><path d="M2.85 2.45L7.95 6.75M7.95 2.45L2.85 6.75" stroke="#b0702a" stroke-width="0.5"/></svg>
<svg class="a" style="left:425.4px;top:86.5px;" width="9.6" height="6.6" viewBox="0 0 9.6 6.6"><ellipse cx="4.8" cy="3.3" rx="4.6" ry="3" fill="#e7a350"/><ellipse cx="4.8" cy="3" rx="1.8" ry="1" fill="#b0702a"/><path d="M0.3 3.3H3M6.6 3.3H9.3M4.8 0.4V2M4.8 4V6.2" stroke="#b0702a" stroke-width="0.45"/></svg>
<div class="a" style="left:443.8px;top:83.2px;width:1.0px;height:13.4px;background:#6a6a6a;"></div>
<svg class="a" style="left:454.0px;top:84.5px;" width="11" height="11" viewBox="0 0 11 11"><circle cx="5" cy="5.2" r="4.8" fill="#e7a350"/><path d="M5 1.8L7.6 3.2V6.6L5 8.4L2.4 6.6V3.2Z M2.4 3.2L5 5L7.6 3.2M5 5V8.4" fill="none" stroke="#b0702a" stroke-width="0.6"/><rect x="8.6" y="8.6" width="1.8" height="1.8" fill="#e8e8e8"/></svg>
<div class="a" style="left:472.8px;top:83.2px;width:1.0px;height:13.4px;background:#6a6a6a;"></div>
<svg class="a" style="left:482.0px;top:84.1px;" width="11.4" height="11.4" viewBox="0 0 11.4 11.4"><path d="M5.4 0.2Q5.9 4.9 10.6 5.4Q5.9 5.9 5.4 10.6Q4.9 5.9 0.2 5.4Q4.9 4.9 5.4 0.2Z" fill="#e7a350"/><rect x="8.8" y="8.8" width="1.8" height="1.8" fill="#e8e8e8"/></svg>
<svg class="a" style="left:496.0px;top:84.3px;" width="10.6" height="10.8" viewBox="0 0 10.6 10.8"><path d="M1.6 2.2Q3.6 0.2 5.6 1.6Q7.6 3 9.4 1.4M0.6 5.2Q3 3.4 5.4 5Q7.6 6.4 10 4.8M1.4 8.6Q3.6 6.6 5.6 8Q7.6 9.4 9.4 7.8" fill="none" stroke="#e7a350" stroke-width="1.5"/></svg>
<svg class="a" style="left:510.4px;top:84.5px;" width="9.4" height="10.6" viewBox="0 0 9.4 10.6"><path d="M0.4 0.4H9V3H7.8Q7.6 1.8 6 1.8V8.6Q6 9.4 7.2 9.4V10.2H2.2V9.4Q3.4 9.4 3.4 8.6V1.8Q1.8 1.8 1.6 3H0.4Z" fill="#e7a350"/></svg>
<svg class="a" style="left:524.8px;top:85.1px;" width="10" height="9.2" viewBox="0 0 10 9.2"><rect x="0.3" y="0.3" width="9.4" height="8.6" fill="#e7a350"/><path d="M1.6 5.2H4L4.8 3.6L5.6 5.2H8.2" stroke="#b0702a" stroke-width="0.8" fill="none"/></svg>
<div class="a" style="left:543.5px;top:83.2px;width:1.0px;height:13.4px;background:#6a6a6a;"></div>
<svg class="a" style="left:553.4px;top:84.9px;" width="9.4" height="9.8" viewBox="0 0 9.4 9.8"><rect x="0.3" y="0.3" width="8.8" height="9.2" fill="#3f9aa0"/><path d="M0.3 2.6H9.1M3.2 2.6V9.5M6.2 2.6V9.5M0.3 4.9H9.1M0.3 7.2H9.1" stroke="#cfeef0" stroke-width="0.6"/></svg>
<div class="a" style="left:572.0px;top:83.2px;width:1.0px;height:13.4px;background:#6a6a6a;"></div>
<svg class="a" style="left:579.6px;top:85.1px;" width="10.6" height="9.4" viewBox="0 0 10.6 9.4"><path d="M5.3 0.6L6.6 3.8L5.3 4.6L4 3.8Z" fill="#d8d8d8"/><path d="M0.6 7.4Q5.3 2 10 7.4Q5.3 9.6 0.6 7.4Z" fill="none" stroke="#58b8c0" stroke-width="0.9"/><path d="M1.6 8.6L9 4.6" stroke="#d8d8d8" stroke-width="0.7"/></svg>
<svg class="a" style="left:595.2px;top:84.7px;" width="10.6" height="10.4" viewBox="0 0 10.6 10.4"><circle cx="3.6" cy="3.8" r="3" fill="#49b4c4"/><path d="M3.6 2V3.8H5" stroke="#e8ffff" stroke-width="0.7" fill="none"/><path d="M6.2 6.4L9.8 10M9.8 6.4L6.2 10" stroke="#e0e0e0" stroke-width="1.1"/><rect x="3" y="7.4" width="2" height="2" fill="#49b4c4"/></svg>
<svg class="a" style="left:609.4px;top:84.7px;" width="11.2" height="10.2" viewBox="0 0 11.2 10.2"><circle cx="5.6" cy="1.6" r="1.2" fill="#e0e0e0"/><path d="M5.6 2.8V6M2.8 4H8.4M2 1L3.4 3.2M9.2 1L7.8 3.2" stroke="#e0e0e0" stroke-width="0.8" fill="none"/><rect x="0.8" y="6.6" width="2.4" height="3" fill="#3fa2a8"/><rect x="4.4" y="6.6" width="2.4" height="3" fill="#3fa2a8"/><rect x="8" y="6.6" width="2.4" height="3" fill="#3fa2a8"/></svg>
<div class="a" style="left:628.8px;top:83.2px;width:1.0px;height:13.4px;background:#6a6a6a;"></div>
<svg class="a" style="left:637.4px;top:84.5px;" width="11.4" height="11" viewBox="0 0 11.4 11"><circle cx="5.2" cy="5" r="4.6" fill="#e7a350"/><circle cx="6.6" cy="6" r="2.8" fill="#444"/><path d="M6.4 9.8A2.4 2.4 0 0 0 9.8 6.6" fill="none" stroke="#d8d8d8" stroke-width="0.6" stroke-dasharray="0.8 0.6"/><rect x="9" y="9" width="1.6" height="1.6" fill="#e8e8e8"/></svg>
<svg class="a" style="left:652.6px;top:84.7px;" width="10.4" height="10.4" viewBox="0 0 10.4 10.4"><circle cx="5.2" cy="5.2" r="4.6" fill="#5a3c1c" stroke="#e7a350" stroke-width="0.9"/><path d="M2.4 4.4Q5.2 1.6 8 4.4L6.8 4.4L8.2 5.8M8 6.2Q5.2 9 2.4 6.2" fill="none" stroke="#e7a350" stroke-width="1.3"/></svg>
<svg class="a" style="left:666.6px;top:84.7px;" width="10.8" height="10.4" viewBox="0 0 10.8 10.4"><rect x="3.8" y="0.4" width="6.4" height="6.4" fill="#dadada"/><rect x="0.4" y="5.8" width="4" height="4" fill="#e7a350"/><rect x="5.6" y="6" width="1.4" height="3.8" fill="#f0f0f0"/></svg>
<svg class="a" style="left:680.0px;top:85.5px;" width="12" height="8.6" viewBox="0 0 12 8.6"><ellipse cx="3" cy="4.3" rx="2.7" ry="4" fill="#e7a350"/><ellipse cx="9" cy="4.3" rx="2.7" ry="4" fill="#e7a350"/><ellipse cx="3" cy="4.3" rx="1" ry="1.8" fill="#b0702a"/><ellipse cx="9" cy="4.3" rx="1" ry="1.8" fill="#b0702a"/></svg>
<svg class="a" style="left:694.8px;top:84.5px;" width="12" height="10.6" viewBox="0 0 12 10.6"><circle cx="4.2" cy="4.6" r="3.8" fill="#e4e4e4"/><circle cx="7.4" cy="5" r="4.2" fill="#e7a350"/><path d="M2.6 7.6Q4.2 10 6 8.8" stroke="#e4e4e4" stroke-width="1" fill="none"/></svg>
<svg class="a" style="left:715.4px;top:83.6px;" width="3.4" height="12.4" viewBox="0 0 3.4 12.4"><path d="M1.7 0.2L3.2 2H0.2Z M1.7 12.2L3.2 10.4H0.2Z" fill="#d0d0d0"/><rect x="0.7" y="3" width="2" height="1.4" fill="#222"/><rect x="0.7" y="5.4" width="2" height="1.4" fill="#222"/><rect x="0.7" y="7.8" width="2" height="1.4" fill="#222"/></svg>
<div class="a" style="left:319.8px;top:99.0px;width:19.4px;height:275.0px;background:#3f3f3f;"></div>
<div class="a" style="left:319.8px;top:99.0px;width:401.4px;height:0.6px;background:#383838;"></div>
<svg class="a" style="left:325.6px;top:107.2px;" width="8" height="11" viewBox="0 0 8 11"><path d="M0.5 0.4V9.2L2.8 7.2L4.4 10.6L5.8 9.9L4.2 6.6H7.2Z" fill="#eaeaea" stroke="#2a2a2a" stroke-width="0.3"/></svg>
<svg class="a" style="left:324.4px;top:123.0px;" width="10" height="12" viewBox="0 0 10 12"><path d="M1.6 5.2A3.4 3.4 0 1 1 6 6.4" fill="none" stroke="#55c2d0" stroke-width="0.8" stroke-dasharray="1.2 0.8"/><path d="M4.4 3.6V10.4L6 9L7 11.4L8 10.9L7 8.6H9Z" fill="#eaeaea"/></svg>
<svg class="a" style="left:323.6px;top:137.6px;" width="11" height="12" viewBox="0 0 11 12"><path d="M10.4 0.6L4.4 6.8" stroke="#e6e6e6" stroke-width="1.4"/><path d="M4.8 6.2L2.4 7.4L1.2 10.8L4.6 9.6L5.8 7.2Z" fill="#cfcfcf"/><path d="M0.8 4.8Q3 2.6 4.6 4.4" stroke="#55c2d0" stroke-width="0.7" fill="none" stroke-dasharray="1 0.7"/></svg>
<div class="a" style="left:322.3px;top:151.6px;width:14.2px;height:14.4px;background:#4f82aa;border-radius:1px;"></div>
<svg class="a" style="left:324.4px;top:153.6px;" width="10" height="10.4" viewBox="0 0 10 10.4"><rect x="3.2" y="3.4" width="3.6" height="3.6" fill="#f0f0f0"/><path d="M5 0.3V3M5 7.4V10.1M0.3 5.2H2.8M7.2 5.2H9.7" stroke="#2d5a80" stroke-width="0.9" stroke-dasharray="1 0.6"/></svg>
<svg class="a" style="left:323.6px;top:168.4px;" width="11" height="11" viewBox="0 0 11 11"><circle cx="5.5" cy="5.5" r="4.6" fill="none" stroke="#dcdcdc" stroke-width="1.1"/><path d="M5.5 2.4L8.2 5.5L5.5 8.6L2.8 5.5Z" fill="#e8e8e8"/><circle cx="5.5" cy="5.5" r="1" fill="#555"/></svg>
<svg class="a" style="left:324.0px;top:184.4px;" width="11" height="12" viewBox="0 0 11 12"><rect x="0.6" y="5.4" width="4.8" height="4.8" fill="#e0e0e0"/><rect x="2.8" y="3" width="4.6" height="4.6" fill="#9a9a9a"/><path d="M8.4 0.6V11M4 0.8H10.4" stroke="#55c2d0" stroke-width="0.6" stroke-dasharray="1 0.8"/></svg>
<div class="a" style="left:322.0px;top:229.2px;width:14.6px;height:0.6px;background:#6a6a6a;"></div>
<div class="a" style="left:323.3px;top:233.3px;width:12.0px;height:12.4px;background:#8a8a8a;border-radius:0.8px;"></div>
<svg class="a" style="left:325.6px;top:235.8px;" width="7.4" height="7.4" viewBox="0 0 7.4 7.4"><path d="M3.7 0.2L5 1.8H2.4Z M3.7 7.2L5 5.6H2.4Z M0.2 3.7L1.8 2.4V5Z M7.2 3.7L5.6 2.4V5Z" fill="#f4f4f4"/><circle cx="3.7" cy="3.7" r="0.9" fill="#f4f4f4"/></svg>
<div class="a" style="left:323.3px;top:248.3px;width:12.0px;height:12.6px;background:#2e2e2e;border-radius:0.6px;border:0.5px solid #777;"></div>
<div class="a" style="left:329.7px;top:249.3px;width:4.6px;height:4.8px;background:#e8e8e8;"></div>
<div class="a" style="left:324.3px;top:249.3px;width:4.6px;height:4.8px;background:#4a4a4a;"></div>
<div class="a" style="left:324.3px;top:254.9px;width:4.6px;height:4.8px;background:#4a4a4a;"></div>
<div class="a" style="left:329.7px;top:254.9px;width:4.6px;height:4.8px;background:#4a4a4a;"></div>
<div class="a" style="left:323.3px;top:263.3px;width:12.0px;height:12.6px;background:#2e2e2e;border-radius:0.6px;border:0.5px solid #777;"></div>
<div class="a" style="left:329.7px;top:264.3px;width:4.6px;height:10.4px;background:#e0e0e0;"></div>
<div class="a" style="left:324.3px;top:264.3px;width:4.6px;height:10.4px;background:#4a4a4a;"></div>
<div class="a" style="left:323.3px;top:278.4px;width:12.0px;height:12.6px;background:#2e2e2e;border-radius:0.6px;border:0.5px solid #777;"></div>
<div class="a" style="left:324.3px;top:279.4px;width:3.4px;height:10.6px;background:#4a4a4a;"></div>
<div class="a" style="left:328.5px;top:279.4px;width:5.8px;height:10.6px;background:#3a3a3a;"></div>
<div class="a" style="left:329.4px;top:281.0px;width:4.0px;height:0.6px;background:#b0b0b0;"></div>
<div class="a" style="left:329.4px;top:284.0px;width:4.0px;height:0.6px;background:#b0b0b0;"></div>
<div class="a" style="left:329.4px;top:287.0px;width:4.0px;height:0.6px;background:#b0b0b0;"></div>
<div class="a" style="left:322.0px;top:294.3px;width:14.6px;height:0.6px;background:#6a6a6a;"></div>
<svg class="a" style="left:324.6px;top:300.0px;" width="10" height="10.4" viewBox="0 0 10 10.4"><circle cx="4" cy="4" r="3.1" fill="none" stroke="#e8e8e8" stroke-width="1.2"/><path d="M6.3 6.4L9.2 9.6" stroke="#e8e8e8" stroke-width="1.5"/></svg>
<div class="a" style="left:323.3px;top:359.5px;width:12.2px;height:12.2px;background:linear-gradient(#4aa2c6,#2b7ea6);border-radius:1.4px;border:0.6px solid #8cc2da;"></div>
<span class="t" style="left:325.60px;top:360.84px;font-size:74px;color:#fff;transform:scale(0.1265,0.1);font-weight:bold;">M</span>
<div class="a" style="left:326.6px;top:368.4px;width:5.6px;height:1.4px;background:#bfe0ee;"></div>
<div class="a" style="left:339.6px;top:99.6px;width:374.0px;height:10.9px;background:#474747;"></div>
<span class="t" style="left:343.50px;top:103.44px;font-size:54px;color:#e4e4e4;transform:scale(0.0939,0.1);">View</span>
<span class="t" style="left:360.00px;top:103.44px;font-size:54px;color:#e4e4e4;transform:scale(0.0893,0.1);">Shading</span>
<span class="t" style="left:384.00px;top:103.44px;font-size:54px;color:#e4e4e4;transform:scale(0.0983,0.1);">Lighting</span>
<span class="t" style="left:408.00px;top:103.44px;font-size:54px;color:#e4e4e4;transform:scale(0.0888,0.1);">Show</span>
<span class="t" style="left:425.50px;top:103.44px;font-size:54px;color:#e4e4e4;transform:scale(0.0919,0.1);">Renderer</span>
<span class="t" style="left:451.80px;top:103.44px;font-size:54px;color:#e4e4e4;transform:scale(0.0872,0.1);">Panels</span>
<div class="a" style="left:339.6px;top:110.5px;width:374.0px;height:8.0px;background:#464646;"></div>
<div class="a" style="left:342.4px;top:111.5px;width:0.8px;height:6.0px;background:#8a8a8a;"></div>
<div class="a" style="left:345.2px;top:111.2px;width:6.6px;height:6.8px;background:#3f9ad6;border-radius:0.6px;"></div>
<span class="t" style="left:346.60px;top:111.44px;font-size:54px;color:#fff;transform:scale(0.1000,0.1);font-weight:bold;">A</span>
<svg class="a" style="left:354.0px;top:111.8px;" width="5.6" height="5.6" viewBox="0 0 5.6 5.6"><path d="M0.5 0.5L5.1 5.1M5.1 0.5L0.5 5.1" stroke="#4fa8dc" stroke-width="1.1"/><rect x="1.8" y="1.8" width="2" height="2" fill="#9ad0f0"/></svg>
<div class="a" style="left:361.2px;top:111.9px;width:5.6px;height:5.0px;background:#565656;border-radius:0.6px;"></div>
<div class="a" style="left:368.5px;top:111.9px;width:5.6px;height:5.0px;background:#565656;border-radius:0.6px;"></div>
<div class="a" style="left:376.0px;top:111.9px;width:5.6px;height:5.0px;background:#565656;border-radius:0.6px;"></div>
<div class="a" style="left:384.6px;top:111.5px;width:0.8px;height:6.0px;background:#8a8a8a;"></div>
<svg class="a" style="left:388.3px;top:111.9px;" width="6.8" height="5.2" viewBox="0 0 6.8 5.2"><rect x="0.2" y="1.2" width="4.4" height="3" fill="#e6e6e6"/><path d="M4.6 2.6L6.6 1.2V4.2Z" fill="#e6e6e6"/><rect x="0.8" y="0.2" width="1.6" height="1.2" fill="#e6e6e6"/></svg>
<svg class="a" style="left:396.0px;top:111.9px;" width="6.8" height="5.2" viewBox="0 0 6.8 5.2"><rect x="0.2" y="1.2" width="4.4" height="3" fill="#e6e6e6"/><path d="M4.6 2.6L6.6 1.2V4.2Z" fill="#e6e6e6"/><rect x="0.8" y="0.2" width="1.6" height="1.2" fill="#e6e6e6"/></svg>
<svg class="a" style="left:403.4px;top:111.9px;" width="6.8" height="5.2" viewBox="0 0 6.8 5.2"><rect x="0.2" y="1.2" width="4.4" height="3" fill="#dcdcdc"/><path d="M4.6 2.6L6.6 1.2V4.2Z" fill="#dcdcdc"/><rect x="0.8" y="0.2" width="1.6" height="1.2" fill="#dcdcdc"/></svg>
<div class="a" style="left:397.4px;top:115.4px;width:3.4px;height:2.0px;background:#3fa2a8;"></div>
<div class="a" style="left:404.8px;top:115.4px;width:3.4px;height:2.0px;background:#3fa2a8;"></div>
<svg class="a" style="left:413.2px;top:111.4px;" width="4.6" height="6.4" viewBox="0 0 4.6 6.4"><path d="M0.4 0.3H4.2V6L2.3 4.4L0.4 6Z" fill="#dcdcdc"/></svg>
<svg class="a" style="left:420.4px;top:111.4px;" width="6.4" height="6.4" viewBox="0 0 6.4 6.4"><path d="M0.6 5.8L3 0.8L4.4 3.6" stroke="#dcdcdc" stroke-width="0.9" fill="none"/><path d="M2 5.8Q4 3.6 6 5.8Z" fill="#52b86a"/></svg>
<svg class="a" style="left:427.8px;top:111.4px;" width="6.4" height="6.4" viewBox="0 0 6.4 6.4"><path d="M0.6 3.6L3.2 0.8L5.8 3.6" stroke="#dcdcdc" stroke-width="0.9" fill="none"/><path d="M1.6 5.6H4.8" stroke="#52b86a" stroke-width="1.1"/></svg>
<svg class="a" style="left:435.6px;top:111.2px;" width="6.4" height="6.8" viewBox="0 0 6.4 6.8"><path d="M0.6 6.2L5.8 0.6" stroke="#5fd07a" stroke-width="1.3"/></svg>
<div class="a" style="left:444.6px;top:111.5px;width:0.8px;height:6.0px;background:#8a8a8a;"></div>
<div class="a" style="left:448.2px;top:110.9px;width:6.8px;height:7.4px;background:#6b9bc4;border-radius:0.5px;"></div>
<svg class="a" style="left:449.4px;top:112.0px;" width="4.4" height="5.2" viewBox="0 0 4.4 5.2"><path d="M0.4 0.3H4V4.9H0.4ZM0.4 1.8H4M0.4 3.4H4" stroke="#dfeefa" stroke-width="0.5" fill="none"/></svg>
<svg class="a" style="left:456.0px;top:111.8px;" width="6" height="5.4" viewBox="0 0 6 5.4"><rect x="0.4" y="0.4" width="5.2" height="4.6" fill="none" stroke="#e6e6e6" stroke-width="0.8"/><rect x="1.4" y="1.9" width="3.2" height="1.6" fill="#e6e6e6"/></svg>
<svg class="a" style="left:464.0px;top:111.8px;" width="6" height="5.4" viewBox="0 0 6 5.4"><rect x="0.4" y="0.4" width="5.2" height="4.6" fill="none" stroke="#4fb8b8" stroke-width="0.8"/><circle cx="3" cy="2.7" r="1.1" fill="#4fb8b8"/></svg>
<div class="a" style="left:471.5px;top:111.9px;width:5.6px;height:5.0px;background:#585858;border-radius:0.6px;"></div>
<svg class="a" style="left:479.3px;top:111.5px;" width="6" height="6" viewBox="0 0 6 6"><rect x="0.5" y="0.8" width="5" height="4.4" fill="none" stroke="#4fb8b8" stroke-width="0.9"/><path d="M0.5 0.8L5.5 5.2M5.5 0.8L0.5 5.2" stroke="#4fb8b8" stroke-width="0.6"/></svg>
<svg class="a" style="left:486.7px;top:111.5px;" width="6" height="6" viewBox="0 0 6 6"><rect x="0.5" y="0.8" width="5" height="4.4" fill="none" stroke="#4fb8b8" stroke-width="0.9"/><path d="M0.5 0.8L5.5 5.2M5.5 0.8L0.5 5.2" stroke="#4fb8b8" stroke-width="0.6"/></svg>
<svg class="a" style="left:494.2px;top:111.8px;" width="6" height="5.4" viewBox="0 0 6 5.4"><rect x="0.4" y="0.4" width="5.2" height="4.6" fill="none" stroke="#4fb8b8" stroke-width="0.8"/><rect x="1.2" y="1.6" width="1.4" height="2.2" fill="#4fb8b8"/><rect x="3.4" y="1.6" width="1.4" height="2.2" fill="#4fb8b8"/></svg>
<div class="a" style="left:503.6px;top:111.5px;width:0.8px;height:6.0px;background:#8a8a8a;"></div>
<svg class="a" style="left:506.4px;top:111.2px;" width="6.6" height="6.8" viewBox="0 0 6.6 6.8"><path d="M3.3 0.4L6.2 1.9V5L3.3 6.5L0.4 5V1.9Z M0.4 1.9L3.3 3.4L6.2 1.9M3.3 3.4V6.5" fill="none" stroke="#d8d8d8" stroke-width="0.7"/></svg>
<div class="a" style="left:513.4px;top:110.9px;width:6.6px;height:7.4px;background:#5aa0d2;border-radius:0.5px;"></div>
<svg class="a" style="left:514.2px;top:111.6px;" width="5" height="6" viewBox="0 0 5 6"><path d="M2.5 0.4L4.7 1.6V4.4L2.5 5.6L0.3 4.4V1.6Z" fill="#cfe6f6" stroke="#2d5a80" stroke-width="0.4"/></svg>
<div class="a" style="left:522.3px;top:111.8px;width:5.4px;height:5.4px;background:#cfcfcf;border-radius:50%;"></div>
<div class="a" style="left:530.3px;top:111.8px;width:5.4px;height:5.4px;background:#8fc4c8;border-radius:50%;"></div>
<div class="a" style="left:538.5px;top:111.8px;width:5.4px;height:5.4px;background:#9a9a9a;border-radius:50%;"></div>
<div class="a" style="left:546.1px;top:111.8px;width:5.4px;height:5.4px;background:#7a7a7a;border-radius:50%;"></div>
<div class="a" style="left:554.3px;top:111.8px;width:5.4px;height:5.4px;background:#5a5a5a;border-radius:50%;"></div>
<div class="a" style="left:561.6px;top:111.5px;width:0.8px;height:6.0px;background:#8a8a8a;"></div>
<svg class="a" style="left:565.6px;top:111.8px;" width="5.8" height="6" viewBox="0 0 5.8 6"><circle cx="2.9" cy="2.2" r="2" fill="#e0e0e0"/><rect x="2.2" y="4" width="1.4" height="1.8" fill="#bdbdbd"/></svg>
<svg class="a" style="left:573.6px;top:111.8px;" width="6" height="6" viewBox="0 0 6 6"><circle cx="3.4" cy="2.4" r="2" fill="#e0e0e0"/><path d="M0.4 5.6L2.2 3.6" stroke="#e0e0e0" stroke-width="0.9"/></svg>
<svg class="a" style="left:581.4px;top:111.5px;" width="6" height="6" viewBox="0 0 6 6"><circle cx="3" cy="3" r="2.3" fill="none" stroke="#5ac0c8" stroke-width="1.1"/></svg>
<div class="a" style="left:583.4px;top:113.5px;width:2.0px;height:2.0px;background:#e6e6e6;border-radius:50%;"></div>
<div class="a" style="left:589.2px;top:111.9px;width:5.6px;height:5.0px;background:#565656;border-radius:0.6px;"></div>
<div class="a" style="left:597.9px;top:111.5px;width:0.8px;height:6.0px;background:#8a8a8a;"></div>
<svg class="a" style="left:602.6px;top:112.0px;" width="5" height="5.6" viewBox="0 0 5 5.6"><rect x="0.3" y="0.3" width="1.6" height="1.6" fill="#bdbdbd"/><path d="M2 1.4V5.2L3 4.4L3.6 5.6L4.2 5.2L3.6 4.2H4.6Z" fill="#f0f0f0"/></svg>
<div class="a" style="left:610.6px;top:111.5px;width:0.8px;height:6.0px;background:#8a8a8a;"></div>
<svg class="a" style="left:613.5px;top:111.5px;" width="6" height="6" viewBox="0 0 6 6"><rect x="0.3" y="1.6" width="3.8" height="4" fill="#8a8a8a" stroke="#e0e0e0" stroke-width="0.6"/><rect x="1.9" y="0.3" width="3.8" height="4" fill="#cfcfcf" stroke="#f0f0f0" stroke-width="0.5"/></svg>
<svg class="a" style="left:621.6px;top:111.5px;" width="6" height="6" viewBox="0 0 6 6"><rect x="0.3" y="1.6" width="3.8" height="4" fill="#8a8a8a" stroke="#e0e0e0" stroke-width="0.6"/><rect x="1.9" y="0.3" width="3.8" height="4" fill="#cfcfcf" stroke="#f0f0f0" stroke-width="0.5"/></svg>
<svg class="a" style="left:629.4px;top:111.5px;" width="6" height="6" viewBox="0 0 6 6"><rect x="0.4" y="0.4" width="5.2" height="5.2" fill="none" stroke="#e0e0e0" stroke-width="0.8"/><path d="M1.4 4.6L4.6 1.4" stroke="#e0e0e0" stroke-width="0.8"/></svg>
<div class="a" style="left:637.6px;top:111.5px;width:0.8px;height:6.0px;background:#8a8a8a;"></div>
<svg class="a" style="left:641.6px;top:111.3px;" width="6.4" height="6.4" viewBox="0 0 6.4 6.4"><circle cx="3.2" cy="3.2" r="2" fill="none" stroke="#e4e4e4" stroke-width="1.5" stroke-dasharray="1 0.6"/><circle cx="3.2" cy="3.2" r="1.5" fill="none" stroke="#e4e4e4" stroke-width="0.9"/></svg>
<div class="a" style="left:649.6px;top:111.3px;width:13.0px;height:6.6px;background:#2e2e2e;border-radius:0.5px;"></div>
<span class="t" style="left:651.30px;top:111.84px;font-size:50px;color:#e0e0e0;transform:scale(0.0976,0.1);">0.00</span>
<svg class="a" style="left:666.6px;top:111.5px;" width="5.8" height="6" viewBox="0 0 5.8 6"><path d="M4.6 0.6A2.5 2.5 0 0 0 4.6 5.4Z" fill="#e8e8e8"/><path d="M4.8 0.6A2.5 2.5 0 0 1 4.8 5.4" fill="none" stroke="#e8e8e8" stroke-width="0.6"/></svg>
<div class="a" style="left:675.6px;top:111.3px;width:12.0px;height:6.6px;background:#2e2e2e;border-radius:0.5px;"></div>
<span class="t" style="left:677.20px;top:111.84px;font-size:50px;color:#e0e0e0;transform:scale(0.0904,0.1);">1.00</span>
<div class="a" style="left:691.4px;top:111.0px;width:6.8px;height:7.0px;background:#3f9ad0;border-radius:0.5px;"></div>
<svg class="a" style="left:692.8px;top:112.6px;" width="4" height="4" viewBox="0 0 4 4"><path d="M0.4 0.6H3.6V3.4H0.4Z" fill="none" stroke="#d6ecfa" stroke-width="0.7"/></svg>
<span class="t" style="left:701.00px;top:111.64px;font-size:52px;color:#e6e6e6;transform:scale(0.0761,0.1);font-weight:bold;">ACES</span>
<div class="a" style="left:713.6px;top:99.6px;width:7.6px;height:275.0px;background:#3c3c3c;"></div>
<div class="a" style="left:713.2px;top:99.6px;width:0.6px;height:275.0px;background:#2e2e2e;"></div>
<span class="t" style="left:689.8px;top:124.2px;font-size:4.6px;color:#9c9c9c;transform:rotate(-90deg) scaleX(0.964);transform-origin:50% 50%">Channel Box / Layer Editor</span>
<span class="t" style="left:702.1px;top:180.7px;font-size:4.6px;color:#9c9c9c;transform:rotate(-90deg) scaleX(1.052);transform-origin:50% 50%">Attribute Editor</span>
<span class="t" style="left:700.8px;top:226.7px;font-size:4.6px;color:#9c9c9c;transform:rotate(-90deg) scaleX(0.942);transform-origin:50% 50%">Modeling Toolkit</span>
<div class="a" style="left:714.0px;top:159.0px;width:7.0px;height:0.5px;background:#555;"></div>
<div class="a" style="left:714.0px;top:205.5px;width:7.0px;height:0.5px;background:#555;"></div>
<div class="a" style="left:714.0px;top:248.0px;width:7.0px;height:0.5px;background:#555;"></div>
<div class="a" style="left:319.8px;top:374.0px;width:401.4px;height:52.7px;background:#444;"></div>
<div class="a" style="left:328.6px;top:378.0px;width:263.6px;height:16.0px;background:#2c2c2c;"></div>
<div class="a" style="left:328.6px;top:376.0px;width:263.6px;height:2.0px;background:#4e4e4e;"></div>
<div class="a" style="left:328.1px;top:385.6px;width:0.9px;height:6.2px;background:#7c7c7c;"></div>
<span class="t" style="left:331.30px;top:378.84px;font-size:50px;color:#b0b0b0;transform:scale(0.1000,0.1);-webkit-text-stroke:1px #b0b0b0;">0</span>
<div class="a" style="left:349.8px;top:385.6px;width:0.9px;height:6.2px;background:#7c7c7c;"></div>
<span class="t" style="left:352.95px;top:378.84px;font-size:50px;color:#b0b0b0;transform:scale(0.1000,0.1);-webkit-text-stroke:1px #b0b0b0;">10</span>
<div class="a" style="left:371.4px;top:385.6px;width:0.9px;height:6.2px;background:#7c7c7c;"></div>
<span class="t" style="left:374.60px;top:378.84px;font-size:50px;color:#b0b0b0;transform:scale(0.1000,0.1);-webkit-text-stroke:1px #b0b0b0;">20</span>
<div class="a" style="left:393.1px;top:385.6px;width:0.9px;height:6.2px;background:#7c7c7c;"></div>
<span class="t" style="left:396.25px;top:378.84px;font-size:50px;color:#b0b0b0;transform:scale(0.1000,0.1);-webkit-text-stroke:1px #b0b0b0;">30</span>
<div class="a" style="left:414.7px;top:385.6px;width:0.9px;height:6.2px;background:#7c7c7c;"></div>
<span class="t" style="left:417.90px;top:378.84px;font-size:50px;color:#b0b0b0;transform:scale(0.1000,0.1);-webkit-text-stroke:1px #b0b0b0;">40</span>
<div class="a" style="left:436.4px;top:385.6px;width:0.9px;height:6.2px;background:#7c7c7c;"></div>
<span class="t" style="left:439.55px;top:378.84px;font-size:50px;color:#b0b0b0;transform:scale(0.1000,0.1);-webkit-text-stroke:1px #b0b0b0;">50</span>
<div class="a" style="left:458.0px;top:385.6px;width:0.9px;height:6.2px;background:#7c7c7c;"></div>
<span class="t" style="left:461.20px;top:378.84px;font-size:50px;color:#b0b0b0;transform:scale(0.1000,0.1);-webkit-text-stroke:1px #b0b0b0;">60</span>
<div class="a" style="left:479.6px;top:385.6px;width:0.9px;height:6.2px;background:#7c7c7c;"></div>
<span class="t" style="left:482.85px;top:378.84px;font-size:50px;color:#b0b0b0;transform:scale(0.1000,0.1);-webkit-text-stroke:1px #b0b0b0;">70</span>
<div class="a" style="left:501.3px;top:385.6px;width:0.9px;height:6.2px;background:#7c7c7c;"></div>
<span class="t" style="left:504.50px;top:378.84px;font-size:50px;color:#b0b0b0;transform:scale(0.1000,0.1);-webkit-text-stroke:1px #b0b0b0;">80</span>
<div class="a" style="left:523.0px;top:385.6px;width:0.9px;height:6.2px;background:#7c7c7c;"></div>
<span class="t" style="left:526.15px;top:378.84px;font-size:50px;color:#b0b0b0;transform:scale(0.1000,0.1);-webkit-text-stroke:1px #b0b0b0;">90</span>
<div class="a" style="left:544.6px;top:385.6px;width:0.9px;height:6.2px;background:#7c7c7c;"></div>
<span class="t" style="left:547.80px;top:378.84px;font-size:50px;color:#b0b0b0;transform:scale(0.1000,0.1);-webkit-text-stroke:1px #b0b0b0;">100</span>
<div class="a" style="left:566.2px;top:385.6px;width:0.9px;height:6.2px;background:#7c7c7c;"></div>
<span class="t" style="left:569.45px;top:378.84px;font-size:50px;color:#b0b0b0;transform:scale(0.1000,0.1);-webkit-text-stroke:1px #b0b0b0;">110</span>
<div class="a" style="left:590.2px;top:385.6px;width:0.9px;height:6.2px;background:#7c7c7c;"></div>
<div class="a" style="left:331.4px;top:384.6px;width:5.6px;height:7.0px;background:#161616;"></div>
<span class="t" style="left:332.80px;top:385.64px;font-size:52px;color:#fff;transform:scale(0.1000,0.1);font-weight:bold;">1</span>
<div class="a" style="left:330.6px;top:376.4px;width:1.0px;height:2.0px;background:#888;"></div>
<div class="a" style="left:330.6px;top:392.6px;width:1.0px;height:1.6px;background:#888;"></div>
<div class="a" style="left:596.2px;top:382.0px;width:22.0px;height:7.4px;background:#2c2c2c;border-radius:0.6px;"></div>
<span class="t" style="left:598.20px;top:382.84px;font-size:50px;color:#e0e0e0;transform:scale(0.1000,0.1);">1</span>
<svg class="a" style="left:630.7px;top:382.3px;" width="7.6" height="6.6" viewBox="0 0 7.6 6.6"><rect x="0.2" y="0.2" width="1" height="6.2" fill="#dedede"/><path d="M1.4 3.3L4.4 0.3V6.3Z" fill="#dedede"/><path d="M4.2 3.3L7.2 0.3V6.3Z" fill="#dedede"/></svg>
<svg class="a" style="left:642.4px;top:382.3px;" width="7.6" height="6.6" viewBox="0 0 7.6 6.6"><rect x="1" y="0.2" width="1" height="6.2" fill="#dedede"/><path d="M2.4 3.3L6.4 0.3V6.3Z" fill="#dedede"/></svg>
<svg class="a" style="left:653.7px;top:382.3px;" width="7.6" height="6.6" viewBox="0 0 7.6 6.6"><rect x="1" y="0.2" width="1" height="6.2" fill="#e8704a"/><path d="M2.4 3.3L6.4 0.3V6.3Z" fill="#dedede"/></svg>
<svg class="a" style="left:665.4px;top:382.3px;" width="7.6" height="6.6" viewBox="0 0 7.6 6.6"><path d="M0.6 3.3L6.6 0V6.6Z" fill="#dedede"/></svg>
<svg class="a" style="left:676.4px;top:382.3px;" width="7.6" height="6.6" viewBox="0 0 7.6 6.6"><path d="M7 3.3L1 0V6.6Z" fill="#dedede"/></svg>
<svg class="a" style="left:687.6px;top:382.3px;" width="7.6" height="6.6" viewBox="0 0 7.6 6.6"><rect x="5.6" y="0.2" width="1" height="6.2" fill="#e8704a"/><path d="M5.2 3.3L1.2 0.3V6.3Z" fill="#dedede"/></svg>
<svg class="a" style="left:699.4px;top:382.3px;" width="7.6" height="6.6" viewBox="0 0 7.6 6.6"><rect x="5.6" y="0.2" width="1" height="6.2" fill="#dedede"/><path d="M5.2 3.3L1.2 0.3V6.3Z" fill="#dedede"/></svg>
<svg class="a" style="left:711.2px;top:382.3px;" width="7.6" height="6.6" viewBox="0 0 7.6 6.6"><rect x="6.4" y="0.2" width="1" height="6.2" fill="#dedede"/><path d="M6.2 3.3L3.2 0.3V6.3Z" fill="#dedede"/><path d="M3.4 3.3L0.4 0.3V6.3Z" fill="#dedede"/></svg>
<div class="a" style="left:328.5px;top:399.6px;width:21.3px;height:8.2px;background:#2c2c2c;border-radius:0.6px;"></div>
<span class="t" style="left:330.40px;top:400.64px;font-size:52px;color:#e6e6e6;transform:scale(0.1000,0.1);">1</span>
<div class="a" style="left:353.5px;top:399.6px;width:81.3px;height:8.2px;background:#2c2c2c;border-radius:0.6px;"></div>
<div class="a" style="left:354.0px;top:400.0px;width:54.0px;height:7.4px;background:#454545;border-radius:0.6px;"></div>
<div class="a" style="left:354.0px;top:400.0px;width:4.0px;height:7.4px;background:#a2a2a2;border-radius:0.6px;"></div>
<div class="a" style="left:403.6px;top:400.0px;width:4.0px;height:7.4px;background:#a2a2a2;border-radius:0.6px;"></div>
<span class="t" style="left:361.60px;top:400.64px;font-size:52px;color:#e6e6e6;transform:scale(0.1000,0.1);-webkit-text-stroke:1.2px #e6e6e6;">1</span>
<span class="t" style="left:392.60px;top:400.64px;font-size:52px;color:#e6e6e6;transform:scale(0.0968,0.1);-webkit-text-stroke:1.2px #e6e6e6;">120</span>
<div class="a" style="left:438.5px;top:399.6px;width:22.5px;height:8.2px;background:#2c2c2c;border-radius:0.6px;"></div>
<span class="t" style="left:440.60px;top:400.64px;font-size:52px;color:#e6e6e6;transform:scale(0.0991,0.1);">200</span>
<div class="a" style="left:469.4px;top:400.8px;width:0.8px;height:6.0px;background:#747474;"></div>
<svg class="a" style="left:480.6px;top:400.0px;" width="6.4" height="7.6" viewBox="0 0 6.4 7.6"><path d="M0.8 0.4H4.8L4.2 2.4L5.6 4.2L3.6 4.4L3 7.2L1.8 4.6L0.8 5.4Z" fill="#f07a3c"/><circle cx="5.2" cy="1" r="0.8" fill="#f4c8a0"/></svg>
<div class="a" style="left:495.6px;top:400.8px;width:0.8px;height:6.0px;background:#747474;"></div>
<svg class="a" style="left:506.6px;top:402.8px;" width="2.8" height="2" viewBox="0 0 2.8 2"><path d="M0 0H2.8L1.4 1.8Z" fill="#8a8a8a"/></svg>
<span class="t" style="left:515.50px;top:400.54px;font-size:53px;color:#dcdcdc;transform:scale(0.0904,0.1);">No Character Set</span>
<svg class="a" style="left:560.6px;top:402.8px;" width="2.8" height="2" viewBox="0 0 2.8 2"><path d="M0 0H2.8L1.4 1.8Z" fill="#8a8a8a"/></svg>
<span class="t" style="left:569.50px;top:400.54px;font-size:53px;color:#dcdcdc;transform:scale(0.0912,0.1);">No Anim Layer</span>
<div class="a" style="left:617.1px;top:400.8px;width:0.8px;height:6.0px;background:#747474;"></div>
<div class="a" style="left:627.0px;top:399.6px;width:41.8px;height:8.0px;background:#5e5e5e;border-radius:0.8px;"></div>
<span class="t" style="left:629.00px;top:400.64px;font-size:52px;color:#e0e0e0;transform:scale(0.0918,0.1);">24 fps</span>
<svg class="a" style="left:662.6px;top:402.6px;" width="3.6" height="2.4" viewBox="0 0 3.6 2.4"><path d="M0 0H3.6L1.8 2.2Z" fill="#dcdcdc"/></svg>
<svg class="a" style="left:674.6px;top:401.2px;" width="7" height="5.2" viewBox="0 0 7 5.2"><ellipse cx="3.5" cy="2.6" rx="2.9" ry="1.9" fill="none" stroke="#e6e6e6" stroke-width="1"/></svg>
<div class="a" style="left:686.0px;top:399.6px;width:8.0px;height:8.0px;background:#6b8fb0;border-radius:0.6px;"></div>
<svg class="a" style="left:687.0px;top:400.6px;" width="6" height="6" viewBox="0 0 6 6"><path d="M0.6 4.2H5.4M0.6 5.4H5.4" stroke="#e6e6e6" stroke-width="0.7"/><rect x="1" y="0.8" width="1.4" height="2.4" fill="#f0a070"/><rect x="3.2" y="1.6" width="1.8" height="1.6" fill="#e6e6e6"/></svg>
<svg class="a" style="left:697.6px;top:400.4px;" width="7" height="7" viewBox="0 0 7 7"><circle cx="3.5" cy="3.5" r="1.5" fill="#f07a3c"/><path d="M3.5 0.3V2M3.5 5V6.7" stroke="#e6e6e6" stroke-width="1.2"/><path d="M0.3 3.5H2M5 3.5H6.7" stroke="#f07a3c" stroke-width="1.4"/></svg>
<div class="a" style="left:714.1px;top:400.8px;width:0.8px;height:6.0px;background:#747474;"></div>
<div class="a" style="left:326.3px;top:415.8px;width:7.0px;height:7.0px;background:#9ac23c;border-radius:50%;"></div>
<span class="t" style="left:328.80px;top:417.34px;font-size:44px;color:#3a4a10;transform:scale(0.1000,0.1);font-weight:bold;">i</span>
<span class="t" style="left:336.00px;top:416.54px;font-size:53px;color:#f4f4f4;transform:scale(0.0770,0.1);font-weight:bold;">Processing</span>
<span class="t" style="left:528.00px;top:416.64px;font-size:52px;color:#e6e6e6;transform:scale(0.0820,0.1);font-weight:bold;">MEL</span>
<div class="a" style="left:540.5px;top:415.5px;width:38.3px;height:7.6px;background:#2c2c2c;border-radius:0.5px;"></div>
<div class="a" style="left:581.2px;top:415.5px;width:136.8px;height:7.6px;background:#2c2c2c;border-radius:0.5px;"></div>
<div class="a" style="left:319.8px;top:412.6px;width:401.4px;height:0.5px;background:#3a3a3a;"></div>
<div class="a" id="vp" style="left:339.6px;top:118.5px;width:373.6px;height:255.6px;overflow:hidden;background:#5d5d5d">
<svg class="a" style="left:0;top:0" width="373.6" height="255.6" viewBox="339.6 118.5 373.6 255.6">
<defs>
<linearGradient id="fl" gradientUnits="userSpaceOnUse" x1="0" y1="160" x2="0" y2="374"><stop offset="0" stop-color="#4b4b4b"/><stop offset="0.12" stop-color="#4f4f4f"/><stop offset="0.45" stop-color="#585858"/><stop offset="1" stop-color="#5e5e5e"/></linearGradient>
<linearGradient id="fll" x1="0" y1="0" x2="1" y2="0"><stop offset="0" stop-color="#000" stop-opacity="0.04"/><stop offset="0.35" stop-color="#000" stop-opacity="0"/></linearGradient>
<linearGradient id="gmg" gradientUnits="userSpaceOnUse" x1="0" y1="162" x2="0" y2="374"><stop offset="0" stop-color="#000"/><stop offset="0.08" stop-color="#333"/><stop offset="0.3" stop-color="#aaa"/><stop offset="0.6" stop-color="#fff"/></linearGradient>
<pattern id="hx" width="1.6" height="1.6" patternUnits="userSpaceOnUse" patternTransform="rotate(20)"><rect width="1.6" height="1.6" fill="#68e6a8"/><path d="M0 0.4H1.6" stroke="#50c88c" stroke-width="0.5"/><path d="M0.4 0V1.6" stroke="#8af5c0" stroke-width="0.4"/></pattern>
<pattern id="rb" width="4.6" height="8" patternUnits="userSpaceOnUse"><rect width="4.6" height="8" fill="#69e8a8"/><rect x="2.9" width="1.5" height="8" fill="#3f9f70"/><rect x="1" width="0.5" height="8" fill="#8ff7c4"/></pattern>
<pattern id="hv" width="1.5" height="3" patternUnits="userSpaceOnUse" patternTransform="rotate(12)"><rect width="1.5" height="3" fill="#60e09e"/><path d="M0.4 0V3" stroke="#48bd83" stroke-width="0.5"/></pattern>
</defs>
<path d="M337.6 176.0L524.8 160.5L715.2 174.2V375.1H337.6Z" fill="url(#fl)"/>
<path d="M337.6 176.0L524.8 160.5L715.2 174.2V375.1H337.6Z" fill="url(#fll)"/>
<path d="M337.6 176.4L524.8 160.9L715.2 174.6" stroke="#404040" stroke-width="1.1" fill="none" opacity="0.6"/>
<mask id="gm" maskUnits="userSpaceOnUse" x="339.6" y="118.5" width="373.6" height="255.6"><rect x="339.6" y="118.5" width="373.6" height="255.6" fill="url(#gmg)"/></mask>
<g mask="url(#gm)">
<path d="M375.2 376.1L337.6 340.7M418.2 376.1L337.6 310.9M461.3 376.1L337.6 288.6M547.4 376.1L337.6 257.2M681.8 376.1L715.2 335.0M590.5 376.1L337.6 245.7M641.9 376.1L715.2 300.9M633.6 376.1L337.6 236.2M601.9 376.1L715.2 276.5M676.6 376.1L337.6 228.1M561.9 376.1L715.2 258.3M715.2 358.1L337.6 215.2M482.0 376.1L715.2 232.8M715.2 343.9L337.6 210.0M442.0 376.1L715.2 223.5M715.2 331.4L337.6 205.3M402.1 376.1L715.2 215.8M715.2 320.3L337.6 201.2M362.1 376.1L715.2 209.2M715.2 301.4L337.6 194.2M337.6 353.4L715.2 198.8M715.2 293.3L337.6 191.2M337.6 339.5L715.2 194.5M715.2 286.0L337.6 188.5M337.6 327.2L715.2 190.8M715.2 279.3L337.6 186.0M337.6 316.3L715.2 187.5M715.2 267.4L337.6 181.6M337.6 297.7L715.2 181.8M715.2 262.2L337.6 179.6M337.6 289.8L715.2 179.4M715.2 257.3L337.6 177.8M337.6 282.6L715.2 177.2M715.2 252.8L337.6 176.2M337.6 276.0L715.2 175.2M715.2 244.7L348.1 175.2M337.6 264.4L707.1 173.6M715.2 241.0L353.4 174.7M337.6 259.2L701.8 173.3M715.2 237.6L358.7 174.3M337.6 254.5L696.6 172.9M715.2 234.4L363.8 173.9M337.6 250.1L691.4 172.5M715.2 228.5L373.8 173.0M337.6 242.1L681.4 171.8M715.2 225.8L378.6 172.6M337.6 238.5L676.5 171.4M715.2 223.2L383.4 172.2M337.6 235.2L671.7 171.1M715.2 220.8L388.0 171.8M337.6 232.0L667.0 170.7M715.2 216.3L397.1 171.1M337.6 226.2L657.8 170.1M715.2 214.2L401.5 170.7M337.6 223.6L653.4 169.8M715.2 212.3L405.8 170.4M337.6 221.1L648.9 169.4M715.2 210.4L410.1 170.0M337.6 218.7L644.6 169.1M715.2 206.8L418.4 169.3M337.6 214.3L636.1 168.5M715.2 205.2L422.4 169.0M337.6 212.3L632.0 168.2M715.2 203.6L426.3 168.7M337.6 210.3L627.9 167.9M715.2 202.1L430.2 168.3M337.6 208.5L623.9 167.6M715.2 199.3L437.8 167.7M337.6 205.1L616.1 167.1M715.2 197.9L441.5 167.4M337.6 203.4L612.3 166.8M715.2 196.6L445.2 167.1M337.6 201.9L608.5 166.5M715.2 195.4L448.8 166.8M337.6 200.4L604.8 166.3M715.2 193.1L455.7 166.2M337.6 197.6L597.6 165.7M715.2 192.0L459.1 165.9M337.6 196.3L594.0 165.5M715.2 190.9L462.5 165.7M337.6 195.1L590.5 165.2M715.2 189.9L465.8 165.4M337.6 193.9L587.1 165.0M715.2 187.9L472.2 164.9M337.6 191.6L580.4 164.5M715.2 187.0L475.4 164.6M337.6 190.5L577.1 164.3M715.2 186.1L478.5 164.3M337.6 189.5L573.8 164.0M715.2 185.2L481.6 164.1M337.6 188.4L570.6 163.8M715.2 183.5L487.5 163.6M337.6 186.5L564.3 163.4M715.2 182.7L490.4 163.4M337.6 185.6L561.3 163.1M715.2 182.0L493.3 163.1M337.6 184.7L558.2 162.9M715.2 181.2L496.2 162.9M337.6 183.9L555.2 162.7M715.2 179.8L501.7 162.4M337.6 182.3L549.4 162.3M715.2 179.1L504.4 162.2M337.6 181.5L546.5 162.1M715.2 178.4L507.1 162.0M337.6 180.7L543.7 161.9M715.2 177.8L509.7 161.8M337.6 180.0L540.9 161.7M715.2 176.5L514.9 161.3M337.6 178.6L535.4 161.3M715.2 175.9L517.4 161.1M337.6 177.9L532.7 161.1M715.2 175.3L519.9 160.9M337.6 177.3L530.0 160.9M715.2 174.8L522.4 160.7M337.6 176.6L527.4 160.7" stroke="#3a3a3a" stroke-width="0.4" fill="none" opacity="0.24"/>
<path d="M504.4 376.1L337.6 271.1M522.0 376.1L715.2 244.1M715.2 310.4L337.6 197.5M337.6 369.3L715.2 203.6M715.2 273.1L337.6 183.7M337.6 306.5L715.2 184.5M715.2 248.6L342.6 175.6M337.6 269.9L712.5 174.0M715.2 231.3L368.8 173.4M337.6 245.9L686.4 172.1M715.2 218.5L392.6 171.5M337.6 229.0L662.4 170.4M715.2 208.6L414.3 169.7M337.6 216.5L640.3 168.8M715.2 200.7L434.1 168.0M337.6 206.7L620.0 167.4M715.2 194.2L452.3 166.5M337.6 199.0L601.2 166.0M715.2 188.9L469.1 165.1M337.6 192.7L583.7 164.7M715.2 184.3L484.6 163.8M337.6 187.5L567.4 163.6M715.2 180.5L499.0 162.6M337.6 183.1L552.3 162.5M715.2 177.1L512.3 161.5M337.6 179.3L538.1 161.5M715.2 174.2L524.8 160.5M337.6 176.0L524.8 160.5" stroke="#363636" stroke-width="0.5" fill="none" opacity="0.32"/>
<path d="M715.2 374.3L337.6 221.2" stroke="#2a2a2a" stroke-width="0.7" fill="none" opacity="0.6"/>
</g>
<path d="M451 171.5L511 252M451 171.5L490.5 252M451 171.5L475.5 224.3L484 254" fill="none" stroke="#74e8ae" stroke-width="0.7" stroke-linecap="round" />
<path d="M450.3 171.7Q470 181 498 184.3Q520 184.5 534 179.5Q540 175 543 163" fill="none" stroke="#74e8ae" stroke-width="0.9" stroke-linecap="round" />
<path d="M450.5 172Q462 187 483.4 206.7Q498 216.5 510.7 216.5Q524 210 534 191.2Q540 182 543.5 172" fill="none" stroke="#74e8ae" stroke-width="0.9" stroke-linecap="round" />
<path d="M544.7 183Q545 200 539.9 212Q533 224 524 233" fill="none" stroke="#74e8ae" stroke-width="0.8" stroke-linecap="round" />
<rect x="462.6" y="176.89999999999998" width="1.8" height="2.2" fill="#86f3bd"/>
<rect x="476.1" y="180.89999999999998" width="1.8" height="2.2" fill="#86f3bd"/>
<rect x="497.1" y="184.29999999999998" width="1.8" height="2.2" fill="#86f3bd"/>
<rect x="516.6" y="183.29999999999998" width="1.8" height="2.2" fill="#86f3bd"/>
<rect x="532.1" y="179.7" width="1.8" height="2.2" fill="#86f3bd"/>
<rect x="463.0" y="189.1" width="1.8" height="2.2" fill="#86f3bd"/>
<rect x="482.5" y="206.7" width="1.8" height="2.2" fill="#86f3bd"/>
<rect x="496.5" y="214.5" width="1.8" height="2.2" fill="#86f3bd"/>
<rect x="508.1" y="216.5" width="1.8" height="2.2" fill="#86f3bd"/>
<rect x="521.5" y="208.6" width="1.8" height="2.2" fill="#86f3bd"/>
<rect x="531.7" y="193.7" width="1.8" height="2.2" fill="#86f3bd"/>
<path d="M472.7 217Q473 232 466.9 243.7Q461 252 454 256" fill="none" stroke="#74e8ae" stroke-width="0.8" stroke-linecap="round" />
<path d="M444.5 221.3L450.3 217.4L472.4 213L473.4 217.4L451.2 221.6Z" fill="url(#hv)" stroke="#86f3bd" stroke-width="0.4" stroke-linejoin="round" />
<path d="M447.3 347.2Q468 343 482.4 324.8Q491 309 491.7 288" fill="none" stroke="#74e8ae" stroke-width="1.3" stroke-linecap="round" />
<path d="M433.3 169.7L451.7 172L451.7 188.4L447.5 216.7L440.4 245.1L434.7 266L422 272.5L406 272.5L407.8 267.8L414.9 245.1L422 216.7L429 188.4Z" fill="url(#hx)" stroke="#86f3bd" stroke-width="0.6" stroke-linejoin="round" />
<path d="M447.6 172L444.6 200L439 224L433 246L427.5 268M443.6 171.5L440.6 200L435 224L429 246L423.5 269" fill="none" stroke="#86f3bd" stroke-width="0.6" stroke-linecap="round" opacity="0.85"/>
<path d="M431 179L449.6 181M428.6 187L449.8 189M426.4 195L449.8 197M424 203L448.8 205M421.8 211L447 213M419.6 219L445 221M417.4 227L443 229M415.2 235L441 237M413.2 243L439 245M411.2 251L437 253M409.4 259L435 261" fill="none" stroke="#3fae78" stroke-width="0.35" stroke-linecap="round" opacity="0.55"/>
<path d="M407.4 299.5L426.9 292.7L447.3 347.2L436.6 357L429.5 349Z" fill="url(#hx)" stroke="#86f3bd" stroke-width="0.6" stroke-linejoin="round" />
<path d="M410.5 305L429.5 299M413 311L431.8 305.2M415.6 317L434 311.4M418.2 323L436.2 317.6M420.8 329L438.6 323.8M423.4 335L441 330M426 341L443.2 336M428.6 347L445.6 342.4" fill="none" stroke="#3fae78" stroke-width="0.35" stroke-linecap="round" opacity="0.55"/>
<path d="M388.5 303.6L394.6 307.4L403.6 293.4L397 289.4Z" fill="#64e5a4" stroke="#86f3bd" stroke-width="0.6" stroke-linejoin="round" />
<path d="M400 287L410 282L414 290L405 296Z" fill="#64e5a4" stroke="#86f3bd" stroke-width="0.4" stroke-linejoin="round" />
<path d="M402 296L409 293L411 299L404 302Z" fill="#64e5a4" stroke="#86f3bd" stroke-width="0.4" stroke-linejoin="round" />
<path d="M404 283L407.3 275.8L414 273L433 264.7L451.9 259.1L474.2 253.5L489.8 254.7L500 255.5L510 247L516 239L526 231L542 221.5L558 217.8L568.6 220.5L606.5 219.6L611 223.4L604.3 238L596.5 251.3L596.5 269.1L579.8 282.5L550.8 295.9L533 298.1L524 292.5L521 286L505 283.6L489.8 287L474.2 289.2L451.9 290.3L429.6 289.2L409.5 281Z" fill="#64e5a4" stroke="#86f3bd" stroke-width="0.6" stroke-linejoin="round" />
<path d="M409.5 280.3L414 276L440.8 271.4L463 269L489.8 264.7L505 260.2L520 258L521 286L505 283.6L489.8 287L474.2 289.2L451.9 290.3L429.6 289.2Z" fill="url(#hv)" stroke="#86f3bd" stroke-width="0.4" stroke-linejoin="round" />
<path d="M437 266L446 263L447 269.5L438 271Z" fill="#52a880" stroke="#86f3bd" stroke-width="0.5" stroke-linejoin="round" />
<path d="M450 262L460 259.5L461 267.5L451 269Z" fill="#52a880" stroke="#86f3bd" stroke-width="0.5" stroke-linejoin="round" />
<path d="M464 259L472 257L473 266L465 267.5Z" fill="#52a880" stroke="#86f3bd" stroke-width="0.5" stroke-linejoin="round" />
<path d="M477 256.5L486 256.5L486 264L477 265.5Z" fill="#52a880" stroke="#86f3bd" stroke-width="0.5" stroke-linejoin="round" />
<path d="M490 257L497 257.5L497 262L490 263.5Z" fill="#52a880" stroke="#86f3bd" stroke-width="0.5" stroke-linejoin="round" />
<circle cx="466" cy="279" r="3.2" fill="#64e5a4" stroke="#86f3bd" stroke-width="0.9"/><circle cx="466" cy="279" r="1.3" fill="#3fae78"/>
<path d="M500 256L510 247L516 239.5L528 236L540 240L530 262L521 286L505 283.6Z" fill="#64e5a4" stroke="#86f3bd" stroke-width="0.5" stroke-linejoin="round" />
<path d="M517 243L527 238L536 240L530 252L520 256Z" fill="#57c890" stroke="#86f3bd" stroke-width="0.4" stroke-linejoin="round" />
<path d="M543 246.5L556 237L573 226L596.5 251.3L595 270.4L579.8 282.5L555.6 292.3L541 295L533 298.1L524 292.5L521 286L530 262Z" fill="#64e5a4" stroke="#86f3bd" stroke-width="0.5" stroke-linejoin="round" />
<path d="M543 246.5L573 225.5L604 241.2L595.8 251.2L541.5 272.2Z" fill="url(#rb)" stroke="#86f3bd" stroke-width="0.5" stroke-linejoin="round" />
<path d="M541.5 272.2L595.8 251.2L595 270.4L579.8 282.5L555.6 292.3L541 295Z" fill="url(#rb)" stroke="#86f3bd" stroke-width="0.5" stroke-linejoin="round" />
<path d="M541.5 272.2L595.8 251.2M541.5 269.6L595.8 248.8" fill="none" stroke="#86f3bd" stroke-width="0.9" stroke-linecap="round" />
<path d="M543 246.5V295" fill="none" stroke="#86f3bd" stroke-width="0.8" stroke-linecap="round" />
<ellipse cx="534.5" cy="286" rx="7.6" ry="9" fill="#5ad498" stroke="#86f3bd" stroke-width="0.6"/><ellipse cx="532" cy="286.8" rx="4.6" ry="6.2" fill="#4fae82" stroke="#86f3bd" stroke-width="0.5"/><ellipse cx="531" cy="287.2" rx="2.2" ry="3.2" fill="#7a9488"/>
<path d="M573 225.5L606.7 219.3L610.6 224.4L604 241.2L595.8 251.2L585 238Z" fill="url(#rb)" stroke="#86f3bd" stroke-width="0.5" stroke-linejoin="round" />
<path d="M587 223.4L605.4 220.6L601.6 229.6L590 232Z" fill="#6f8078" stroke="#86f3bd" stroke-width="0.5" stroke-linejoin="round" />
<path d="M573 225.5L606.7 219.3L610.6 224.4" fill="none" stroke="#86f3bd" stroke-width="1.0" stroke-linecap="round" />
<path d="M516 239L526 231L542 221.5L558 217.8L568 221L566 228L556 232L540 238L528 236Z" fill="#5cd79a" stroke="#86f3bd" stroke-width="0.4" stroke-linejoin="round" />
<path d="M531 237L541 232.5L549 234L545 243L536 246Z" fill="#4a8f70" stroke="#86f3bd" stroke-width="0.4" stroke-linejoin="round" />
<path d="M549 229L558 226.4L566 228.4L561 237L552 239Z" fill="#4f9c7a" stroke="#86f3bd" stroke-width="0.4" stroke-linejoin="round" />
<path d="M520 246L529 241L534 244L528 253L521 255Z" fill="#58b98b" stroke="#86f3bd" stroke-width="0.4" stroke-linejoin="round" />
<path d="M514 240.5L528 234.5L548 223M536 246L561 237M545 243L543 246.5" fill="none" stroke="#86f3bd" stroke-width="0.6" stroke-linecap="round" />
<path d="M570.6 189L578.7 189L572.6 223L565.6 223Z" fill="url(#hx)" stroke="#86f3bd" stroke-width="0.5" stroke-linejoin="round" />
<path d="M569.4 196H577.6M568.6 203H576.4M567.8 210H575.2M567 217H574" fill="none" stroke="#3fae78" stroke-width="0.4" stroke-linecap="round" />
<path d="M593.3 187L601.6 185.6L583.4 243.6L576.6 243Z" fill="#64e5a4" stroke="#86f3bd" stroke-width="0.5" stroke-linejoin="round" />
<circle cx="579.6" cy="243.4" r="3.1" fill="#64e5a4" stroke="#86f3bd" stroke-width="0.5"/>
<path d="M583.5 146L584.5 127.3L588.5 127.3L589.2 146Z" fill="#64e5a4" stroke="#86f3bd" stroke-width="0.4" stroke-linejoin="round" />
<path d="M606.3 147.5L614.4 127.3L619 127.3L611.4 147.5Z" fill="#64e5a4" stroke="#86f3bd" stroke-width="0.4" stroke-linejoin="round" />
<path d="M545.4 147.6L543 162" fill="none" stroke="#86f3bd" stroke-width="0.9" stroke-linecap="round" />
<path d="M543.8 152.5L573.8 149.2L580 145.6L583.6 144.4L601.4 144.4L606.3 146.8L622 147.4L629.5 151L631 160L630.6 172L628 182L606.3 187L583.6 191.8L554.4 188L545.4 181L542.2 163.8Z" fill="url(#hx)" stroke="#86f3bd" stroke-width="0.7" stroke-linejoin="round" />
<path d="M545 154L571 151L578 160L579 186L556 184.5L547 178L544.5 164Z" fill="#5bd798" stroke="#86f3bd" stroke-width="0.5" stroke-linejoin="round" />
<path d="M552.5 165L558 164.4L558.4 174L553 174.4Z" fill="#3f9a72" stroke="#86f3bd" stroke-width="0.5" stroke-linejoin="round" />
<path d="M560 170L566 166L569 177L563 179Z" fill="#67e6a6" stroke="#86f3bd" stroke-width="0.4" stroke-linejoin="round" />
<path d="M571 151L582 146M578 160L583.6 157M545 178L568 160" fill="none" stroke="#86f3bd" stroke-width="0.5" stroke-linecap="round" />
<path d="M584 167L589.4 166.6L589.8 178L584.4 178.4Z" fill="#3f9a72" stroke="#86f3bd" stroke-width="0.5" stroke-linejoin="round" />
<path d="M593 170L600 169L600.6 180L593.6 181Z" fill="#55c990" stroke="#86f3bd" stroke-width="0.4" stroke-linejoin="round" />
<path d="M605 158L610 157.6L610.6 176L605.6 176.6Z" fill="#3f9a72" stroke="#86f3bd" stroke-width="0.4" stroke-linejoin="round" />
<path d="M613.6 160L618 159.6L618.4 175L614 175.4Z" fill="#47aa7c" stroke="#86f3bd" stroke-width="0.4" stroke-linejoin="round" />
<path d="M574 149.4Q600 151 629 152.5M579 186Q600 184 625.8 176" fill="none" stroke="#86f3bd" stroke-width="0.5" stroke-linecap="round" />
<path d="M622 150L622.6 182M626.4 152L626.6 180" fill="none" stroke="#3fae78" stroke-width="0.6" stroke-linecap="round" opacity="0.7"/>
<path d="M552.5 165H558M584 167H589.4M605 158H610M613.6 160H618M593 170L600 169" fill="none" stroke="#b8ffd8" stroke-width="0.7" stroke-linecap="round" />
<path d="M586 142.6L600 142.6L600 146L586 146Z" fill="#4fbf8a" stroke="#86f3bd" stroke-width="0.4" stroke-linejoin="round" />
<rect x="504" y="285" width="13" height="16" fill="#7a7a7a" opacity="0.85"/><path d="M498 291L522 297M507.5 285V301M513.5 285V301" stroke="#9a9a9a" stroke-width="0.7"/>
<path d="M511.6 302.5L506.7 373.5" fill="none" stroke="#0c0c0c" stroke-width="0.9" stroke-linecap="round" />
<rect x="510.6" y="300.6" width="2.2" height="2.2" fill="#b4b4b4"/>
<rect x="506.2" y="197" width="6.4" height="7.6" rx="0.8" fill="#e03c3c"/>
<rect x="548.6" y="197" width="6.4" height="7.6" rx="0.8" fill="#2c4ce0"/>
<path d="M530.2 179.4L533.4 188H527Z" fill="#a6e04a"/>
<path d="M496 232.2L503.6 229V235.2Z" fill="#2030d8"/><ellipse cx="503.6" cy="232.1" rx="1.4" ry="3.1" fill="#1828c0"/>
<path d="M565.4 232L558 228.8V235Z" fill="#e0452c"/>
<rect x="525.3" y="220.4" width="6.8" height="7.6" fill="none" stroke="#9a9a9a" stroke-width="0.5"/>
<path d="M559.7 206.7V220M557 207.5H562.4" stroke="#8ad8b0" stroke-width="0.9"/>
<path d="M526 234.6L534 233.2L533.6 235.8Z" fill="#b6e84a"/>
<path d="M530.2 188V222" stroke="#8a9a8a" stroke-width="0.4"/>
<g stroke="#6e6e6e" stroke-width="0.5" stroke-linejoin="round"><path d="M676 133.7L689.2 131L702.5 134.6L689.7 136.9Z" fill="#a6a6a6"/><path d="M676 133.7L689.7 136.9L689.7 155.6L676.9 150.6Z" fill="#b4b4b4"/><path d="M689.7 136.9L702.5 134.6L702 149.2L689.7 155.6Z" fill="#9c9c9c"/></g>
<path d="M679.4 142.6L686.8 145.2" stroke="#6a6a6a" stroke-width="1.5" opacity="0.8"/><path d="M692.4 145.6L699.6 142.8" stroke="#666" stroke-width="1.5" opacity="0.8"/><path d="M686.5 132.6L691.5 133.6" stroke="#8a8a8a" stroke-width="1.2" opacity="0.8"/>
<path d="M351 361.6V356.4" stroke="#4ad04a" stroke-width="0.8"/><path d="M351 361.6L355.4 363" stroke="#d04a4a" stroke-width="0.8"/><path d="M351 361.6L347.8 363.4" stroke="#4a5ad0" stroke-width="0.8"/>
</svg>
<span class="t" style="left:6.90px;top:0.64px;font-size:46px;color:#f2f2f2;transform:scale(0.1000,0.1);font-weight:bold;">Verts:</span>
<span class="t" style="left:27.70px;top:0.64px;font-size:46px;color:#f2f2f2;transform:scale(0.0977,0.1);font-weight:bold;">16854495</span>
<span class="t" style="left:54.70px;top:0.64px;font-size:46px;color:#f2f2f2;transform:scale(0.0963,0.1);font-weight:bold;">36375293</span>
<span class="t" style="left:101.80px;top:0.64px;font-size:46px;color:#f2f2f2;transform:scale(0.1000,0.1);font-weight:bold;">0</span>
<span class="t" style="left:6.90px;top:9.64px;font-size:46px;color:#f2f2f2;transform:scale(0.1000,0.1);font-weight:bold;">Edges:</span>
<span class="t" style="left:27.70px;top:9.64px;font-size:46px;color:#f2f2f2;transform:scale(0.0977,0.1);font-weight:bold;">33803668</span>
<span class="t" style="left:54.70px;top:9.64px;font-size:46px;color:#f2f2f2;transform:scale(0.0963,0.1);font-weight:bold;">32830091</span>
<span class="t" style="left:101.80px;top:9.64px;font-size:46px;color:#f2f2f2;transform:scale(0.1000,0.1);font-weight:bold;">0</span>
<span class="t" style="left:6.90px;top:17.64px;font-size:46px;color:#f2f2f2;transform:scale(0.1000,0.1);font-weight:bold;">Faces:</span>
<span class="t" style="left:27.70px;top:17.64px;font-size:46px;color:#f2f2f2;transform:scale(0.0977,0.1);font-weight:bold;">16946491</span>
<span class="t" style="left:54.70px;top:17.64px;font-size:46px;color:#f2f2f2;transform:scale(0.0963,0.1);font-weight:bold;">36452938</span>
<span class="t" style="left:101.80px;top:17.64px;font-size:46px;color:#f2f2f2;transform:scale(0.1000,0.1);font-weight:bold;">0</span>
<span class="t" style="left:6.90px;top:25.64px;font-size:46px;color:#f2f2f2;transform:scale(0.1000,0.1);font-weight:bold;">Tris:</span>
<span class="t" style="left:27.70px;top:25.64px;font-size:46px;color:#f2f2f2;transform:scale(0.0977,0.1);font-weight:bold;">33591863</span>
<span class="t" style="left:54.70px;top:25.64px;font-size:46px;color:#f2f2f2;transform:scale(0.0963,0.1);font-weight:bold;">32635199</span>
<span class="t" style="left:101.80px;top:25.64px;font-size:46px;color:#f2f2f2;transform:scale(0.1000,0.1);font-weight:bold;">0</span>
<span class="t" style="left:6.90px;top:33.64px;font-size:46px;color:#f2f2f2;transform:scale(0.1000,0.1);font-weight:bold;">UVs:</span>
<span class="t" style="left:27.70px;top:33.64px;font-size:46px;color:#f2f2f2;transform:scale(0.0977,0.1);font-weight:bold;">19180870</span>
<span class="t" style="left:54.70px;top:33.64px;font-size:46px;color:#f2f2f2;transform:scale(0.0963,0.1);font-weight:bold;">58534459</span>
<span class="t" style="left:101.80px;top:33.64px;font-size:46px;color:#f2f2f2;transform:scale(0.1000,0.1);font-weight:bold;">0</span>
<span class="t" style="left:179.60px;top:247.84px;font-size:44px;color:#f2f2f2;transform:scale(0.0943,0.1);font-weight:bold;">persp</span>
</div>
</div></div>
</body></html>
